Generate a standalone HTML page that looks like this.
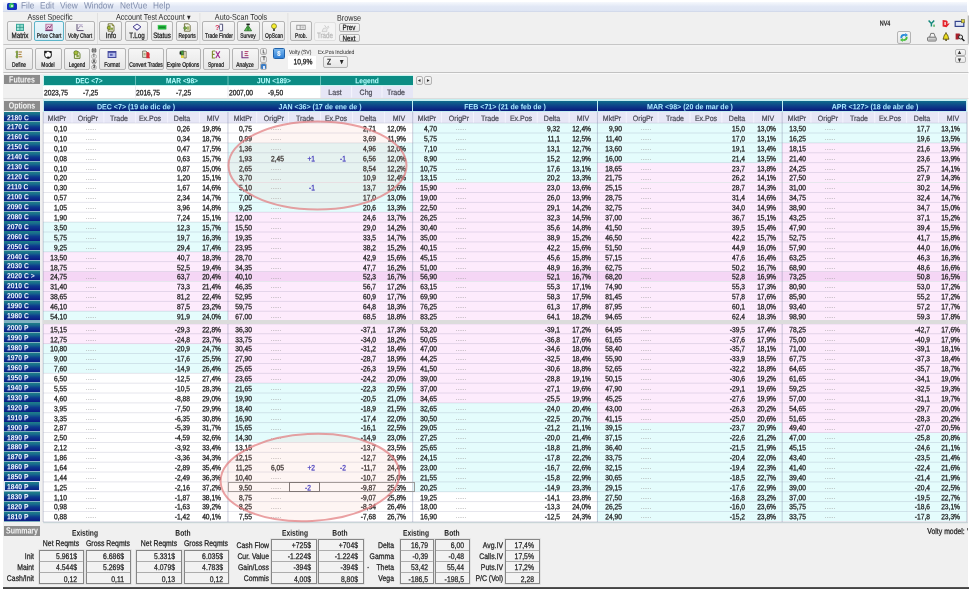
<!DOCTYPE html>
<html><head><meta charset="utf-8"><title>Options Matrix</title><style>
html,body{margin:0;padding:0;background:#fff}
#p{will-change:transform;-webkit-mask-image:linear-gradient(#000,#000);mask-image:linear-gradient(#000,#000);position:relative;width:972px;height:591px;overflow:hidden;font-family:"Liberation Sans",Arial,sans-serif;color:#222}
#p div,#p span{position:absolute}
.t{white-space:nowrap;line-height:1;font-size:7.6px;--k:0.8}
.t.c{transform:translate(-50%,-50%) scaleX(var(--k)) rotate(0.03deg)}
.t.l{transform-origin:0 50%;transform:translate(0,-50%) scaleX(var(--k)) rotate(0.03deg)}
.t.r{transform-origin:100% 50%;transform:translate(-100%,-50%) scaleX(var(--k)) rotate(0.03deg)}
.menu{font-size:9.2px;color:#7f8cab;--k:0.9}
.grp{font-size:8.4px;color:#2a2a2a;--k:0.86}
.bl{font-size:7.8px;color:#1a1a1a;--k:0.8;-webkit-text-stroke:0.25px}
.bs{font-size:6.4px;color:#1a1a1a;--k:0.77;-webkit-text-stroke:0.25px}
.xs{font-size:6px;color:#222;--k:0.84}
.dis{color:#b8b8b8}
.tiny{font-size:5.4px;color:#333;font-weight:bold;--k:0.9}
.icn{font-size:9px;font-weight:bold}
.lab{font-size:9px;font-weight:bold;color:#f4f4f4;--k:0.78}
.fh{font-size:7.5px;font-weight:bold;color:#b8ffff;--k:0.88}
.mt{font-size:7.5px;font-weight:bold;color:#a8e8ff;--k:0.94}
.hd{font-size:7.8px;color:#484854;--k:0.9;-webkit-text-stroke:0.2px}
.val{font-size:7.7px;color:#222;--k:0.865;-webkit-text-stroke:0.3px}
.dots{font-size:8px;color:#9a9a9a;--k:0.8}
.st{font-size:7.5px;font-weight:bold;color:#f0f6ff;--k:0.9}
.sh{font-size:8.4px;font-weight:bold;color:#222}
.sl{font-size:8.2px;color:#222;--k:0.84;-webkit-text-stroke:0.25px}
.sv{font-size:8.2px;color:#222;--k:0.835;-webkit-text-stroke:0.25px}
.btn{box-sizing:border-box;border:0.8px solid #b4b4b4;border-radius:2px;background:linear-gradient(#f6f6f6,#e6e6e6)}
.btn.hi{border-color:#5cb4c8;background:linear-gradient(#eaf6fb,#d6ecf6)}
.sk{background:linear-gradient(#1f8088 0%,#176a8c 25%,#0e3a8e 55%,#0a1a84 100%)}
.mh{background:linear-gradient(#0f6c8c 0%,#0c3c88 55%,#0a1a7c 100%)}
.gl{background:rgba(110,110,150,0.20)}
.vl{background:rgba(120,130,160,0.35)}
.vb{box-sizing:border-box;border:0.9px solid #868686;background:#f2f2f2;box-shadow:0 0 0 0.7px #dcdcdc}
</style></head><body><div id="p">
<div style="left:0.00px;top:0.00px;width:972.00px;height:591.00px;background:#fff"></div>
<div style="left:2.90px;top:2.20px;width:964.10px;height:9.40px;background:linear-gradient(#f6f8fd,#e2e8f5 45%,#dde4f3)"></div>
<svg style="position:absolute;left:2px;top:11px" width="965" height="2" viewBox="2 11 965 2"><rect x="2.90" y="11.40" width="964.10" height="0.70" fill="#ccd4e6"/></svg>
<div style="left:2.90px;top:11.50px;width:965.60px;height:576.50px;background:#f0f0f0"></div>
<div style="left:6.50px;top:2.50px;width:10.00px;height:7.30px;background:#1530c0;border-radius:1.5px"></div>
<div style="left:9.00px;top:3.20px;width:5.00px;height:5.00px;background:#35c060;border-radius:2.5px"></div>
<div style="left:10.50px;top:4.50px;width:2.00px;height:2.30px;background:#e8fff0;border-radius:1px"></div>
<span class="t l menu" style="left:21.00px;top:6.30px;">File</span>
<span class="t l menu" style="left:39.50px;top:6.30px;">Edit</span>
<span class="t l menu" style="left:60.00px;top:6.30px;">View</span>
<span class="t l menu" style="left:84.00px;top:6.30px;">Window</span>
<span class="t l menu" style="left:120.00px;top:6.30px;">NetVue</span>
<span class="t l menu" style="left:153.00px;top:6.30px;">Help</span>
<span class="t c grp" style="left:50.00px;top:16.60px;">Asset Specific</span>
<span class="t c grp" style="left:152.50px;top:16.60px;">Account Test Account &#9662;</span>
<span class="t c grp" style="left:240.50px;top:16.60px;">Auto-Scan Tools</span>
<span class="t c grp" style="left:349.00px;top:17.60px;">Browse</span>
<div class="btn" style="left:7.00px;top:20.90px;width:25.00px;height:20.00px;"></div>
<svg style="position:absolute;left:14.50px;top:23.00px" width="10" height="9" viewBox="0 0 10 9"><rect x="1" y="0.8" width="8" height="7.2" fill="#3aa99c"/><rect x="2" y="1.8" width="2.4" height="5.2" fill="#a8e6da"/><rect x="5.4" y="1.8" width="2.6" height="5.2" fill="#8fdccd"/><path d="M1 4.4H9" stroke="#2c8c80" stroke-width=".7"/></svg>
<span class="t c bl" style="left:19.50px;top:35.70px;">Matrix</span>
<div class="btn hi" style="left:34.00px;top:20.90px;width:29.50px;height:20.00px;"></div>
<svg style="position:absolute;left:43.75px;top:23.00px" width="10" height="9" viewBox="0 0 10 9"><rect x="1.4" y="0.8" width="7.2" height="7.2" fill="#b66c9c"/><rect x="2.4" y="1.6" width="5.2" height="4.6" fill="#ecd2e4"/><path d="M2.4 6L4.5 3.2 5.8 5 7.6 1.8" stroke="#7a3c74" stroke-width=".9" fill="none"/><path d="M1.4 7.6H8.6" stroke="#5c3468" stroke-width=".9"/></svg>
<span class="t c bs" style="left:48.75px;top:35.70px;">Price Chart</span>
<div class="btn" style="left:65.00px;top:20.90px;width:29.50px;height:20.00px;"></div>
<svg style="position:absolute;left:74.75px;top:23.00px" width="10" height="9" viewBox="0 0 10 9"><path d="M2 1V7.6H8.6" stroke="#5a4c70" stroke-width="1" fill="none"/><path d="M3.4 5.8C4.4 2.4 6.2 2.2 8 4.2" stroke="#8a78a4" stroke-width=".9" fill="none"/><rect x="3.2" y="1.2" width="4.6" height="1" fill="#c4b8d8"/></svg>
<span class="t c bs" style="left:79.75px;top:35.70px;">Volty Chart</span>
<div class="btn" style="left:99.00px;top:20.90px;width:23.00px;height:20.00px;"></div>
<svg style="position:absolute;left:105.50px;top:23.00px" width="10" height="9" viewBox="0 0 10 9"><path d="M2.2 .8H6.2L8 2.6V8.2H2.2Z" fill="#f6f6e6" stroke="#5c5c20" stroke-width=".8"/><path d="M6.2 .8V2.6H8" fill="#c8d040" stroke="#5c5c20" stroke-width=".6"/><path d="M1.4 3.8L4.2 2.6V6.8L1.4 5.8Z" fill="#a8c030" stroke="#4c5c18" stroke-width=".6"/><rect x="4.6" y="4.6" width="2.4" height="2.2" fill="#88a040"/></svg>
<span class="t c bl" style="left:110.50px;top:35.70px;">Info</span>
<div class="btn" style="left:125.00px;top:20.90px;width:23.00px;height:20.00px;"></div>
<svg style="position:absolute;left:131.50px;top:23.00px" width="10" height="9" viewBox="0 0 10 9"><path d="M5 1L9 3.8 5 7 1 3.8Z" fill="#f4f4ff" stroke="#48408c" stroke-width="1"/><path d="M1.6 4.8L5 7.6 8.4 4.8" stroke="#7870b0" stroke-width=".7" fill="none"/></svg>
<span class="t c bl" style="left:136.50px;top:35.70px;">T.Log</span>
<div class="btn" style="left:151.00px;top:20.90px;width:21.50px;height:20.00px;"></div>
<svg style="position:absolute;left:156.75px;top:23.00px" width="10" height="9" viewBox="0 0 10 9"><rect x=".8" y="2" width="8.6" height="4.6" rx=".6" fill="#22b43c"/><rect x="2" y="3.6" width="6.2" height="1.2" fill="#12802a"/><path d="M.8 2.3H9.4" stroke="#70e080" stroke-width=".6"/></svg>
<span class="t c bl" style="left:161.75px;top:35.70px;">Status</span>
<div class="btn" style="left:175.50px;top:20.90px;width:22.00px;height:20.00px;"></div>
<svg style="position:absolute;left:181.50px;top:23.00px" width="10" height="9" viewBox="0 0 10 9"><path d="M2.4 .8H6.4L8.2 2.6V8.2H2.4Z" fill="#f4f4e4" stroke="#5c5c28" stroke-width=".8"/><path d="M1.2 5L3.4 3.2V4.4H5V5.8H3.4V7Z" fill="#70a838" stroke="#3c6420" stroke-width=".4"/><rect x="5" y="3.4" width="2.4" height="3.4" fill="#a8b868"/></svg>
<span class="t c bs" style="left:186.50px;top:35.70px;">Reports</span>
<div class="btn" style="left:202.00px;top:20.90px;width:33.00px;height:20.00px;"></div>
<svg style="position:absolute;left:213.50px;top:23.00px" width="10" height="9" viewBox="0 0 10 9"><text x="1" y="7.2" font-family="Liberation Sans,sans-serif" font-size="7.5" font-weight="bold" fill="#d83058">?</text><path d="M5.6 1.2H8.6V7.8H5.6" fill="#f4f4ff" stroke="#44446c" stroke-width=".9"/><path d="M5.4 2.4V6.6" stroke="#44446c" stroke-width=".8"/></svg>
<span class="t c bs" style="left:218.50px;top:35.70px;">Trade Finder</span>
<div class="btn" style="left:237.00px;top:20.90px;width:22.50px;height:20.00px;"></div>
<svg style="position:absolute;left:243.25px;top:23.00px" width="10" height="9" viewBox="0 0 10 9"><rect x="3.4" y=".6" width="3.4" height="1.6" fill="#202020"/><path d="M5 2.2L8.6 7.8H1.4Z" fill="#58c050" stroke="#286c28" stroke-width=".8"/><path d="M5 3.6V7.6" stroke="#1c4c1c" stroke-width=".8"/></svg>
<span class="t c bs" style="left:248.25px;top:35.70px;">Survey</span>
<div class="btn" style="left:262.00px;top:20.90px;width:23.00px;height:20.00px;"></div>
<svg style="position:absolute;left:268.50px;top:23.00px" width="10" height="9" viewBox="0 0 10 9"><circle cx="5" cy="3.2" r="2.5" fill="#f6ee30" stroke="#6c6c20" stroke-width=".7"/><rect x="4" y="5.6" width="2" height="2.4" fill="#585848"/></svg>
<span class="t c bs" style="left:273.50px;top:35.70px;">OpScan</span>
<div class="btn" style="left:290.00px;top:20.90px;width:22.00px;height:20.00px;"></div>
<svg style="position:absolute;left:296.00px;top:23.00px" width="10" height="9" viewBox="0 0 10 9"><rect x=".8" y="2.2" width="8.4" height="4.4" fill="#f2f2f2" stroke="#8c8c8c" stroke-width=".8"/><path d="M4.2 2.2V6.6" stroke="#8c8c8c" stroke-width=".8"/><rect x="5.4" y="3.4" width="2.6" height="2" fill="#c4c4c4"/></svg>
<span class="t c bs" style="left:301.00px;top:35.70px;">Prob.</span>
<div style="left:314.00px;top:21.50px;width:22.00px;height:19.50px;border:1px solid #e0e0e0;background:#f4f4f4;border-radius:2px;box-sizing:border-box"></div>
<svg style="position:absolute;left:320.00px;top:23.50px" width="10" height="9" viewBox="0 0 10 9"><path d="M2 7.6L3.4 4.4 6.2 4 8.4 2.2 8.8 3.4 6.8 5.6V7.6Z" fill="#ececec" stroke="#c4c4c4" stroke-width=".7"/><path d="M4.6 1.2L6 3.4" stroke="#c8c8c8" stroke-width=".9"/></svg>
<span class="t c bl dis" style="left:325.00px;top:36.00px;">Trade</span>
<div class="btn" style="left:339.00px;top:23.00px;width:20.50px;height:8.70px;"></div>
<span class="t c bl" style="left:349.20px;top:28.10px;">Prev</span>
<div class="btn" style="left:339.00px;top:33.50px;width:20.50px;height:8.50px;"></div>
<span class="t c bl" style="left:349.20px;top:38.60px;">Next</span>
<svg style="position:absolute;left:97px;top:13px" width="1" height="31" viewBox="97 13 1 31"><rect x="97.00" y="13.00" width="0.80" height="31.00" fill="#dcdcdc"/></svg>
<svg style="position:absolute;left:199px;top:13px" width="2" height="31" viewBox="199 13 2 31"><rect x="199.50" y="13.00" width="0.80" height="31.00" fill="#dcdcdc"/></svg>
<svg style="position:absolute;left:287px;top:13px" width="2" height="31" viewBox="287 13 2 31"><rect x="287.50" y="13.00" width="0.80" height="31.00" fill="#dcdcdc"/></svg>
<span class="t c bs" style="left:884.50px;top:23.40px;font-size:7px">NV4</span>
<div class="btn" style="left:897.40px;top:30.90px;width:13.20px;height:13.00px;"></div>
<svg style="position:absolute;left:899px;top:32px" width="10" height="11" viewBox="0 0 10 11"><path d="M1.4 6.2C1 3 3.6 1.4 6.4 2.4L6 1 9 3 6 5 6.2 3.8C4.4 3.4 3 4.4 3.2 6.2Z" fill="#2a8cd8"/><path d="M8.6 4.8C9 8 6.4 9.600 3.600 8.6L4 10 1 8 4 6 3.800 7.2C5.600 7.600 7 6.600 6.800 4.800Z" fill="#48c03c"/></svg>
<svg style="position:absolute;left:925px;top:18px" width="44" height="26" viewBox="925 18 44 26"><path d="M928.6 20.6L931.4 23.6V26.6M934.2 20.6L931.4 23.6" stroke="#14887c" stroke-width="1.5" fill="none"/><rect x="933.4" y="24.6" width="1.3" height="2.2" fill="#38a848"/><path d="M942.6 20L946.6 20.4 948 22 946.8 23.6 949.8 23.6 946.6 27.2 942.6 26.6Z" fill="#e4242c"/><rect x="944.4" y="22" width="1.4" height="3" fill="#fbe4e4"/><rect x="955.2" y="21.4" width="8.6" height="5" fill="#dfe6f6" stroke="#34448c" stroke-width="1.2"/><rect x="961.6" y="19.6" width="2.8" height="3.2" fill="#d8cc3c" stroke="#5c5c20" stroke-width=".5"/><path d="M929.6 37.4L930.8 33.4H934L935.4 37.4" fill="#f4f4f4" stroke="#6c6c6c" stroke-width=".9"/><rect x="927.6" y="37.2" width="8.6" height="3.8" rx=".8" fill="#e4e4e4" stroke="#606060" stroke-width=".9"/><path d="M928.6 39.2H935.4" stroke="#888" stroke-width=".7"/><path d="M943 39.2C944 38 943.6 34.2 946 33.6 948.4 34.2 948 38 949 39.2Z" fill="#ecdc20" stroke="#4c4410" stroke-width=".8"/><rect x="945.2" y="39.4" width="1.8" height="1.4" fill="#4c4410"/><rect x="945.4" y="32.4" width="1.2" height="1.4" fill="#4c4410"/><path d="M955.6 33.4H959.6L960.4 36 958.4 39.6H955.6Z" fill="#a8202c"/><circle cx="960.6" cy="37" r="2" fill="#e8e8e8" stroke="#2c2c2c" stroke-width="1"/><path d="M961.8 38.4L964.4 41" stroke="#1c1c1c" stroke-width="1.4"/></svg>
<svg style="position:absolute;left:967px;top:15px" width="2" height="29" viewBox="967 15 2 29"><rect x="967.80" y="15.50" width="0.90" height="28.30" fill="#9c9c9c"/></svg>
<svg style="position:absolute;left:3px;top:44px" width="966" height="2" viewBox="3 44 966 2"><rect x="3.40" y="44.20" width="965.10" height="1.10" fill="#bcbcbc"/></svg>
<svg style="position:absolute;left:3px;top:45px" width="966" height="2" viewBox="3 45 966 2"><rect x="3.40" y="45.30" width="965.10" height="0.90" fill="#fbfbfb"/></svg>
<div class="btn" style="left:5.00px;top:47.90px;width:27.50px;height:22.20px;"></div>
<svg style="position:absolute;left:13.75px;top:50.40px" width="10" height="9" viewBox="0 0 10 9"><path d="M3 .8V8.2" stroke="#5c7c28" stroke-width="1.5"/><path d="M4.4 2H8M4.4 4.4H7.4M4.4 6.8H8.2" stroke="#a87c2c" stroke-width="1"/><rect x="1.6" y="1.2" width="1.8" height="1.6" fill="#88a838"/><rect x="1.6" y="5.8" width="1.8" height="1.6" fill="#88a838"/></svg>
<span class="t c bs" style="left:18.75px;top:64.60px;">Define</span>
<div class="btn" style="left:35.00px;top:47.90px;width:26.50px;height:22.20px;"></div>
<svg style="position:absolute;left:43.25px;top:50.40px" width="10" height="9" viewBox="0 0 10 9"><circle cx="5" cy="4.6" r="3.4" fill="#fff" stroke="#2a2a2a" stroke-width="1.1"/><rect x="1.2" y=".8" width="2.4" height="2.4" fill="#1c1c1c"/><rect x="6.6" y="1" width="2" height="2" fill="#1c1c1c"/><rect x="4.2" y="6.6" width="2.2" height="2" fill="#1c1c1c"/></svg>
<span class="t c bs" style="left:48.25px;top:64.60px;">Model</span>
<div class="btn" style="left:63.50px;top:47.90px;width:26.50px;height:22.20px;"></div>
<svg style="position:absolute;left:71.75px;top:50.40px" width="10" height="9" viewBox="0 0 10 9"><path d="M2.4 1.8H6.4L8 3.4V8.4H2.4Z" fill="#f0f2d8" stroke="#5c7824" stroke-width=".9"/><circle cx="4" cy="2.8" r="2.1" fill="#a8c03c" stroke="#587020" stroke-width=".7"/><rect x="4.4" y="4.8" width="2.4" height="2.4" fill="#88a040"/></svg>
<span class="t c bs" style="left:76.75px;top:64.60px;">Legend</span>
<div class="btn" style="left:91.20px;top:48.00px;width:5.80px;height:5.30px;border-radius:2.6px"></div>
<span class="t c tiny" style="left:94.10px;top:50.80px;">M</span>
<div class="btn" style="left:91.20px;top:53.55px;width:5.80px;height:5.30px;border-radius:2.6px"></div>
<span class="t c tiny" style="left:94.10px;top:56.35px;">I</span>
<div class="btn" style="left:91.20px;top:59.10px;width:5.80px;height:5.30px;border-radius:2.6px"></div>
<span class="t c tiny" style="left:94.10px;top:61.90px;">A</span>
<div class="btn" style="left:91.20px;top:64.65px;width:5.80px;height:5.30px;border-radius:2.6px"></div>
<span class="t c tiny" style="left:94.10px;top:67.45px;">3</span>
<div class="btn" style="left:99.00px;top:47.90px;width:26.50px;height:22.20px;"></div>
<svg style="position:absolute;left:107.25px;top:50.40px" width="10" height="9" viewBox="0 0 10 9"><rect x=".6" y="1" width="8.8" height="7" fill="#44489c"/><rect x="1.6" y="2.8" width="6.8" height="4.2" fill="#b4bcec"/><rect x="3" y="3.8" width="2.6" height="2" fill="#5860b4"/></svg>
<span class="t c bs" style="left:112.25px;top:64.60px;">Format</span>
<div class="btn" style="left:127.50px;top:47.90px;width:36.00px;height:22.20px;"></div>
<svg style="position:absolute;left:140.50px;top:50.40px" width="10" height="9" viewBox="0 0 10 9"><path d="M1.6 1H5L6.2 2.2V7.4H1.6Z" fill="#e8e4d4" stroke="#6c6c5c" stroke-width=".8"/><path d="M5.4 2.2C8 1.4 9.4 3.6 8.4 6.2L9 8.2H5.4Z" fill="#d82c34"/><rect x="2.6" y="3" width="2" height="2.4" fill="#a8b48c"/></svg>
<span class="t c bs" style="left:145.50px;top:64.60px;">Convert Trades</span>
<div class="btn" style="left:165.50px;top:47.90px;width:35.50px;height:22.20px;"></div>
<svg style="position:absolute;left:178.25px;top:50.40px" width="10" height="9" viewBox="0 0 10 9"><path d="M2 1.4L5.4 .8 6 4.4 3.4 5.6Z" fill="#48a040" stroke="#1c4c1c" stroke-width=".7"/><path d="M5.8 1.4H8.2V8H5.8Z" fill="#ece8c8" stroke="#5c5c3c" stroke-width=".7"/><rect x="3" y="5.4" width="2.6" height="2.6" fill="#e4d43c"/><rect x="1.6" y="2.2" width="1.6" height="2.2" fill="#1c1c1c"/></svg>
<span class="t c bs" style="left:183.25px;top:64.60px;">Expire Options</span>
<div class="btn" style="left:203.00px;top:47.90px;width:26.50px;height:22.20px;"></div>
<svg style="position:absolute;left:211.25px;top:50.40px" width="10" height="9" viewBox="0 0 10 9"><path d="M1.4 1V8H4.2M1.4 1H4.2M1.4 4.4H3.6" stroke="#7c8c2c" stroke-width="1.1" fill="none"/><path d="M4.8 1.2L8.8 8M8.8 1.2L4.8 8" stroke="#a02c8c" stroke-width="1.2"/></svg>
<span class="t c bs" style="left:216.25px;top:64.60px;">Spread</span>
<div class="btn" style="left:232.00px;top:47.90px;width:26.50px;height:22.20px;"></div>
<svg style="position:absolute;left:240.25px;top:50.40px" width="10" height="9" viewBox="0 0 10 9"><path d="M2 1V7.8H8.6" stroke="#6c2c7c" stroke-width="1.1" fill="none"/><path d="M4.6 1.6H8.4M4.6 3.6H7.6M4.6 5.6H8.4" stroke="#b03c6c" stroke-width="1"/></svg>
<span class="t c bs" style="left:245.25px;top:64.60px;">Analyze</span>
<div class="btn" style="left:260.20px;top:48.20px;width:7.10px;height:7.00px;"></div>
<div class="btn" style="left:260.20px;top:55.70px;width:7.10px;height:6.90px;"></div>
<div class="btn" style="left:260.20px;top:63.10px;width:7.10px;height:7.00px;"></div>
<span class="t c tiny" style="left:263.80px;top:51.90px;">L</span>
<span class="t c tiny" style="left:263.80px;top:59.30px;">T</span>
<div style="left:261.40px;top:64.20px;width:4.80px;height:5.00px;background:#3b7cc4;border-radius:1px"></div>
<div style="left:262.60px;top:66.20px;width:2.40px;height:3.00px;background:#dbe9ff"></div>
<div style="left:273.00px;top:48.10px;width:12.00px;height:10.70px;background:linear-gradient(#7ab8ee,#2f80d8);border:0.8px solid #2060a8;border-radius:1.5px;box-sizing:border-box"></div>
<span class="t c bs" style="left:279.00px;top:53.60px;color:#fff;font-weight:bold">S</span>
<span class="t l xs" style="left:288.70px;top:51.60px;">Volty (SV)</span>
<div style="left:288.00px;top:56.00px;width:28.00px;height:13.00px;background:#fff"></div>
<span class="t c val" style="left:303.00px;top:62.30px;">10,9%</span>
<span class="t l xs" style="left:318.00px;top:51.60px;">Ex.Pos Included</span>
<div class="btn" style="left:323.00px;top:56.00px;width:24.50px;height:11.50px;"></div>
<span class="t l val" style="left:326.50px;top:62.00px;">Z</span>
<span class="t c val" style="left:342.00px;top:62.20px;">&#9662;</span>
<div class="btn" style="left:954.60px;top:48.50px;width:11.20px;height:7.60px;"></div>
<div class="btn" style="left:954.60px;top:56.20px;width:11.20px;height:6.70px;"></div>
<span class="t c tiny" style="left:960.20px;top:52.30px;font-size:6.5px">&#9652;</span>
<span class="t c tiny" style="left:960.20px;top:59.50px;font-size:6.5px">&#9662;</span>
<svg style="position:absolute;left:3px;top:72px" width="966" height="2" viewBox="3 72 966 2"><rect x="3.40" y="72.00" width="965.10" height="1.10" fill="#c2c2c2"/></svg>
<svg style="position:absolute;left:3px;top:73px" width="966" height="1" viewBox="3 73 966 1"><rect x="3.40" y="73.10" width="965.10" height="0.90" fill="#fbfbfb"/></svg>
<div style="left:4.30px;top:74.60px;width:36.20px;height:9.80px;background:#8c8c8c"></div>
<span class="t c lab" style="left:22.40px;top:80.10px;">Futures</span>
<div style="left:43.20px;top:75.20px;width:370.00px;height:10.80px;background:#c8f4f0"></div>
<div style="left:43.60px;top:76.20px;width:369.60px;height:8.70px;background:#0c8c84"></div>
<span class="t c fh" style="left:89.35px;top:80.60px;">DEC &lt;7&gt;</span>
<span class="t c fh" style="left:181.75px;top:80.60px;">MAR &lt;98&gt;</span>
<svg style="position:absolute;left:135px;top:76px" width="1" height="9" viewBox="135 76 1 9"><rect x="135.10" y="76.20" width="0.80" height="8.70" fill="#7fd0c8"/></svg>
<span class="t c fh" style="left:274.25px;top:80.60px;">JUN &lt;189&gt;</span>
<svg style="position:absolute;left:227px;top:76px" width="2" height="9" viewBox="227 76 2 9"><rect x="227.60" y="76.20" width="0.80" height="8.70" fill="#7fd0c8"/></svg>
<span class="t c fh" style="left:366.85px;top:80.60px;">Legend</span>
<svg style="position:absolute;left:320px;top:76px" width="1" height="9" viewBox="320 76 1 9"><rect x="320.10" y="76.20" width="0.80" height="8.70" fill="#7fd0c8"/></svg>
<div style="left:43.20px;top:86.30px;width:277.30px;height:11.30px;background:#fff"></div>
<span class="t l val" style="left:43.70px;top:93.30px;">2023,75</span>
<span class="t l val" style="left:83.20px;top:93.30px;">-7,25</span>
<span class="t l val" style="left:136.00px;top:93.30px;">2016,75</span>
<span class="t l val" style="left:175.50px;top:93.30px;">-7,25</span>
<svg style="position:absolute;left:135px;top:86px" width="1" height="12" viewBox="135 86 1 12"><rect x="135.10" y="86.30" width="0.80" height="11.30" fill="#e4e4ea"/></svg>
<span class="t l val" style="left:228.50px;top:93.30px;">2007,00</span>
<span class="t l val" style="left:268.00px;top:93.30px;">-9,50</span>
<svg style="position:absolute;left:227px;top:86px" width="2" height="12" viewBox="227 86 2 12"><rect x="227.60" y="86.30" width="0.80" height="11.30" fill="#e4e4ea"/></svg>
<div style="left:320.50px;top:86.30px;width:92.70px;height:11.30px;background:#e6e6f6"></div>
<span class="t c hd" style="left:334.90px;top:93.40px;">Last</span>
<span class="t c hd" style="left:365.65px;top:93.40px;">Chg</span>
<svg style="position:absolute;left:351px;top:86px" width="2" height="12" viewBox="351 86 2 12"><rect x="351.30" y="86.30" width="0.80" height="11.30" fill="#f8f8ff"/></svg>
<span class="t c hd" style="left:396.40px;top:93.40px;">Trade</span>
<svg style="position:absolute;left:381px;top:86px" width="2" height="12" viewBox="381 86 2 12"><rect x="381.60" y="86.30" width="0.80" height="11.30" fill="#f8f8ff"/></svg>
<div class="btn" style="left:415.50px;top:76.30px;width:7.70px;height:8.50px;"></div>
<div class="btn" style="left:424.00px;top:76.30px;width:7.80px;height:8.50px;"></div>
<span class="t c tiny" style="left:419.20px;top:80.60px;">&#9666;</span>
<span class="t c tiny" style="left:427.80px;top:80.60px;">&#9656;</span>
<svg style="position:absolute;left:3px;top:98px" width="966" height="1" viewBox="3 98 966 1"><rect x="3.40" y="98.20" width="965.10" height="0.80" fill="#d8d8d8"/></svg>
<div style="left:4.30px;top:100.90px;width:36.20px;height:9.80px;background:#8c8c8c"></div>
<span class="t c lab" style="left:22.40px;top:105.80px;">Options</span>
<div style="left:43.00px;top:99.40px;width:923.90px;height:12.60px;background:#c4eef0"></div>
<div class="mh" style="left:43.60px;top:101.40px;width:183.94px;height:9.70px;"></div>
<span class="t c mt" style="left:135.57px;top:106.50px;">DEC &lt;7&gt; (19 de dic de )</span>
<div class="mh" style="left:228.34px;top:101.40px;width:183.94px;height:9.70px;"></div>
<span class="t c mt" style="left:320.31px;top:106.50px;">JAN &lt;36&gt; (17 de ene de )</span>
<div class="mh" style="left:413.08px;top:101.40px;width:183.94px;height:9.70px;"></div>
<span class="t c mt" style="left:505.05px;top:106.50px;">FEB &lt;71&gt; (21 de feb de )</span>
<div class="mh" style="left:597.82px;top:101.40px;width:183.94px;height:9.70px;"></div>
<span class="t c mt" style="left:689.79px;top:106.50px;">MAR &lt;98&gt; (20 de mar de )</span>
<div class="mh" style="left:782.56px;top:101.40px;width:183.94px;height:9.70px;"></div>
<span class="t c mt" style="left:874.53px;top:106.50px;">APR &lt;127&gt; (18 de abr de )</span>
<div style="left:43.20px;top:111.90px;width:923.70px;height:410.10px;background:#fff"></div>
<div style="left:43.20px;top:111.90px;width:923.70px;height:11.20px;background:#e7e7f6"></div>
<span class="t c hd" style="left:56.80px;top:118.80px;">MktPr</span>
<span class="t c hd" style="left:87.90px;top:118.80px;">OrigPr</span>
<svg style="position:absolute;left:71px;top:111px" width="2" height="13" viewBox="71 111 2 13"><rect x="71.60" y="111.90" width="0.80" height="11.20" fill="#f6f6ff"/></svg>
<span class="t c hd" style="left:119.20px;top:118.80px;">Trade</span>
<svg style="position:absolute;left:103px;top:111px" width="2" height="13" viewBox="103 111 2 13"><rect x="103.50" y="111.90" width="0.80" height="11.20" fill="#f6f6ff"/></svg>
<span class="t c hd" style="left:150.30px;top:118.80px;">Ex.Pos</span>
<svg style="position:absolute;left:135px;top:111px" width="2" height="13" viewBox="135 111 2 13"><rect x="135.40" y="111.90" width="0.80" height="11.20" fill="#f6f6ff"/></svg>
<span class="t c hd" style="left:181.80px;top:118.80px;">Delta</span>
<svg style="position:absolute;left:167px;top:111px" width="2" height="13" viewBox="167 111 2 13"><rect x="167.30" y="111.90" width="0.80" height="11.20" fill="#f6f6ff"/></svg>
<span class="t c hd" style="left:212.80px;top:118.80px;">MIV</span>
<svg style="position:absolute;left:199px;top:111px" width="2" height="13" viewBox="199 111 2 13"><rect x="199.20" y="111.90" width="0.80" height="11.20" fill="#f6f6ff"/></svg>
<span class="t c hd" style="left:242.74px;top:118.80px;">MktPr</span>
<span class="t c hd" style="left:273.84px;top:118.80px;">OrigPr</span>
<svg style="position:absolute;left:256px;top:111px" width="2" height="13" viewBox="256 111 2 13"><rect x="256.34" y="111.90" width="0.80" height="11.20" fill="#f6f6ff"/></svg>
<span class="t c hd" style="left:305.14px;top:118.80px;">Trade</span>
<svg style="position:absolute;left:288px;top:111px" width="2" height="13" viewBox="288 111 2 13"><rect x="288.24" y="111.90" width="0.80" height="11.20" fill="#f6f6ff"/></svg>
<span class="t c hd" style="left:336.24px;top:118.80px;">Ex.Pos</span>
<svg style="position:absolute;left:320px;top:111px" width="1" height="13" viewBox="320 111 1 13"><rect x="320.14" y="111.90" width="0.80" height="11.20" fill="#f6f6ff"/></svg>
<span class="t c hd" style="left:367.74px;top:118.80px;">Delta</span>
<svg style="position:absolute;left:352px;top:111px" width="1" height="13" viewBox="352 111 1 13"><rect x="352.04" y="111.90" width="0.80" height="11.20" fill="#f6f6ff"/></svg>
<span class="t c hd" style="left:398.74px;top:118.80px;">MIV</span>
<svg style="position:absolute;left:383px;top:111px" width="2" height="13" viewBox="383 111 2 13"><rect x="383.94" y="111.90" width="0.80" height="11.20" fill="#f6f6ff"/></svg>
<span class="t c hd" style="left:427.48px;top:118.80px;">MktPr</span>
<span class="t c hd" style="left:458.58px;top:118.80px;">OrigPr</span>
<svg style="position:absolute;left:441px;top:111px" width="1" height="13" viewBox="441 111 1 13"><rect x="441.08" y="111.90" width="0.80" height="11.20" fill="#f6f6ff"/></svg>
<span class="t c hd" style="left:489.88px;top:118.80px;">Trade</span>
<svg style="position:absolute;left:472px;top:111px" width="2" height="13" viewBox="472 111 2 13"><rect x="472.98" y="111.90" width="0.80" height="11.20" fill="#f6f6ff"/></svg>
<span class="t c hd" style="left:520.98px;top:118.80px;">Ex.Pos</span>
<svg style="position:absolute;left:504px;top:111px" width="2" height="13" viewBox="504 111 2 13"><rect x="504.88" y="111.90" width="0.80" height="11.20" fill="#f6f6ff"/></svg>
<span class="t c hd" style="left:552.48px;top:118.80px;">Delta</span>
<svg style="position:absolute;left:536px;top:111px" width="2" height="13" viewBox="536 111 2 13"><rect x="536.78" y="111.90" width="0.80" height="11.20" fill="#f6f6ff"/></svg>
<span class="t c hd" style="left:583.48px;top:118.80px;">MIV</span>
<svg style="position:absolute;left:568px;top:111px" width="2" height="13" viewBox="568 111 2 13"><rect x="568.68" y="111.90" width="0.80" height="11.20" fill="#f6f6ff"/></svg>
<span class="t c hd" style="left:612.22px;top:118.80px;">MktPr</span>
<span class="t c hd" style="left:643.32px;top:118.80px;">OrigPr</span>
<svg style="position:absolute;left:625px;top:111px" width="2" height="13" viewBox="625 111 2 13"><rect x="625.82" y="111.90" width="0.80" height="11.20" fill="#f6f6ff"/></svg>
<span class="t c hd" style="left:674.62px;top:118.80px;">Trade</span>
<svg style="position:absolute;left:657px;top:111px" width="2" height="13" viewBox="657 111 2 13"><rect x="657.72" y="111.90" width="0.80" height="11.20" fill="#f6f6ff"/></svg>
<span class="t c hd" style="left:705.72px;top:118.80px;">Ex.Pos</span>
<svg style="position:absolute;left:689px;top:111px" width="2" height="13" viewBox="689 111 2 13"><rect x="689.62" y="111.90" width="0.80" height="11.20" fill="#f6f6ff"/></svg>
<span class="t c hd" style="left:737.22px;top:118.80px;">Delta</span>
<svg style="position:absolute;left:721px;top:111px" width="2" height="13" viewBox="721 111 2 13"><rect x="721.52" y="111.90" width="0.80" height="11.20" fill="#f6f6ff"/></svg>
<span class="t c hd" style="left:768.22px;top:118.80px;">MIV</span>
<svg style="position:absolute;left:753px;top:111px" width="2" height="13" viewBox="753 111 2 13"><rect x="753.42" y="111.90" width="0.80" height="11.20" fill="#f6f6ff"/></svg>
<span class="t c hd" style="left:796.96px;top:118.80px;">MktPr</span>
<span class="t c hd" style="left:828.06px;top:118.80px;">OrigPr</span>
<svg style="position:absolute;left:810px;top:111px" width="2" height="13" viewBox="810 111 2 13"><rect x="810.56" y="111.90" width="0.80" height="11.20" fill="#f6f6ff"/></svg>
<span class="t c hd" style="left:859.36px;top:118.80px;">Trade</span>
<svg style="position:absolute;left:842px;top:111px" width="2" height="13" viewBox="842 111 2 13"><rect x="842.46" y="111.90" width="0.80" height="11.20" fill="#f6f6ff"/></svg>
<span class="t c hd" style="left:890.46px;top:118.80px;">Ex.Pos</span>
<svg style="position:absolute;left:874px;top:111px" width="2" height="13" viewBox="874 111 2 13"><rect x="874.36" y="111.90" width="0.80" height="11.20" fill="#f6f6ff"/></svg>
<span class="t c hd" style="left:921.96px;top:118.80px;">Delta</span>
<svg style="position:absolute;left:906px;top:111px" width="2" height="13" viewBox="906 111 2 13"><rect x="906.26" y="111.90" width="0.80" height="11.20" fill="#f6f6ff"/></svg>
<span class="t c hd" style="left:952.96px;top:118.80px;">MIV</span>
<svg style="position:absolute;left:938px;top:111px" width="1" height="13" viewBox="938 111 1 13"><rect x="938.16" y="111.90" width="0.80" height="11.20" fill="#f6f6ff"/></svg>
<div style="left:3.60px;top:112.20px;width:36.60px;height:410.00px;background:#7fb0c0"></div>
<div class="sk" style="left:3.60px;top:112.20px;width:36.60px;height:9.20px;"></div>
<span class="t l st" style="left:6.90px;top:117.50px;">2180 C</span>
<div class="sk" style="left:3.60px;top:122.13px;width:36.60px;height:9.20px;"></div>
<span class="t l st" style="left:6.90px;top:127.43px;">2170 C</span>
<div class="sk" style="left:3.60px;top:132.06px;width:36.60px;height:9.20px;"></div>
<span class="t l st" style="left:6.90px;top:137.36px;">2160 C</span>
<div class="sk" style="left:3.60px;top:141.99px;width:36.60px;height:9.20px;"></div>
<span class="t l st" style="left:6.90px;top:147.29px;">2150 C</span>
<div class="sk" style="left:3.60px;top:151.92px;width:36.60px;height:9.20px;"></div>
<span class="t l st" style="left:6.90px;top:157.22px;">2140 C</span>
<div class="sk" style="left:3.60px;top:161.85px;width:36.60px;height:9.20px;"></div>
<span class="t l st" style="left:6.90px;top:167.15px;">2130 C</span>
<div class="sk" style="left:3.60px;top:171.78px;width:36.60px;height:9.20px;"></div>
<span class="t l st" style="left:6.90px;top:177.08px;">2120 C</span>
<div class="sk" style="left:3.60px;top:181.71px;width:36.60px;height:9.20px;"></div>
<span class="t l st" style="left:6.90px;top:187.01px;">2110 C</span>
<div class="sk" style="left:3.60px;top:191.64px;width:36.60px;height:9.20px;"></div>
<span class="t l st" style="left:6.90px;top:196.94px;">2100 C</span>
<div class="sk" style="left:3.60px;top:201.57px;width:36.60px;height:9.20px;"></div>
<span class="t l st" style="left:6.90px;top:206.87px;">2090 C</span>
<div class="sk" style="left:3.60px;top:211.50px;width:36.60px;height:9.20px;"></div>
<span class="t l st" style="left:6.90px;top:216.80px;">2080 C</span>
<div class="sk" style="left:3.60px;top:221.43px;width:36.60px;height:9.20px;"></div>
<span class="t l st" style="left:6.90px;top:226.73px;">2070 C</span>
<div class="sk" style="left:3.60px;top:231.36px;width:36.60px;height:9.20px;"></div>
<span class="t l st" style="left:6.90px;top:236.66px;">2060 C</span>
<div class="sk" style="left:3.60px;top:241.29px;width:36.60px;height:9.20px;"></div>
<span class="t l st" style="left:6.90px;top:246.59px;">2050 C</span>
<div class="sk" style="left:3.60px;top:251.22px;width:36.60px;height:9.20px;"></div>
<span class="t l st" style="left:6.90px;top:256.52px;">2040 C</span>
<div class="sk" style="left:3.60px;top:261.15px;width:36.60px;height:9.20px;"></div>
<span class="t l st" style="left:6.90px;top:266.45px;">2030 C</span>
<div class="sk" style="left:3.60px;top:271.08px;width:36.60px;height:9.20px;"></div>
<span class="t l st" style="left:6.90px;top:276.38px;">2020 C ></span>
<div class="sk" style="left:3.60px;top:281.01px;width:36.60px;height:9.20px;"></div>
<span class="t l st" style="left:6.90px;top:286.31px;">2010 C</span>
<div class="sk" style="left:3.60px;top:290.94px;width:36.60px;height:9.20px;"></div>
<span class="t l st" style="left:6.90px;top:296.24px;">2000 C</span>
<div class="sk" style="left:3.60px;top:300.87px;width:36.60px;height:9.20px;"></div>
<span class="t l st" style="left:6.90px;top:306.17px;">1990 C</span>
<div class="sk" style="left:3.60px;top:310.80px;width:36.60px;height:9.20px;"></div>
<span class="t l st" style="left:6.90px;top:316.10px;">1980 C</span>
<div class="sk" style="left:3.60px;top:323.00px;width:36.60px;height:9.20px;"></div>
<span class="t l st" style="left:6.90px;top:328.30px;">2000 P</span>
<div class="sk" style="left:3.60px;top:332.93px;width:36.60px;height:9.20px;"></div>
<span class="t l st" style="left:6.90px;top:338.23px;">1990 P</span>
<div class="sk" style="left:3.60px;top:342.86px;width:36.60px;height:9.20px;"></div>
<span class="t l st" style="left:6.90px;top:348.16px;">1980 P</span>
<div class="sk" style="left:3.60px;top:352.79px;width:36.60px;height:9.20px;"></div>
<span class="t l st" style="left:6.90px;top:358.09px;">1970 P</span>
<div class="sk" style="left:3.60px;top:362.72px;width:36.60px;height:9.20px;"></div>
<span class="t l st" style="left:6.90px;top:368.02px;">1960 P</span>
<div class="sk" style="left:3.60px;top:372.65px;width:36.60px;height:9.20px;"></div>
<span class="t l st" style="left:6.90px;top:377.95px;">1950 P</span>
<div class="sk" style="left:3.60px;top:382.58px;width:36.60px;height:9.20px;"></div>
<span class="t l st" style="left:6.90px;top:387.88px;">1940 P</span>
<div class="sk" style="left:3.60px;top:392.51px;width:36.60px;height:9.20px;"></div>
<span class="t l st" style="left:6.90px;top:397.81px;">1930 P</span>
<div class="sk" style="left:3.60px;top:402.44px;width:36.60px;height:9.20px;"></div>
<span class="t l st" style="left:6.90px;top:407.74px;">1920 P</span>
<div class="sk" style="left:3.60px;top:412.37px;width:36.60px;height:9.20px;"></div>
<span class="t l st" style="left:6.90px;top:417.67px;">1910 P</span>
<div class="sk" style="left:3.60px;top:422.30px;width:36.60px;height:9.20px;"></div>
<span class="t l st" style="left:6.90px;top:427.60px;">1900 P</span>
<div class="sk" style="left:3.60px;top:432.23px;width:36.60px;height:9.20px;"></div>
<span class="t l st" style="left:6.90px;top:437.53px;">1890 P</span>
<div class="sk" style="left:3.60px;top:442.16px;width:36.60px;height:9.20px;"></div>
<span class="t l st" style="left:6.90px;top:447.46px;">1880 P</span>
<div class="sk" style="left:3.60px;top:452.09px;width:36.60px;height:9.20px;"></div>
<span class="t l st" style="left:6.90px;top:457.39px;">1870 P</span>
<div class="sk" style="left:3.60px;top:462.02px;width:36.60px;height:9.20px;"></div>
<span class="t l st" style="left:6.90px;top:467.32px;">1860 P</span>
<div class="sk" style="left:3.60px;top:471.95px;width:36.60px;height:9.20px;"></div>
<span class="t l st" style="left:6.90px;top:477.25px;">1850 P</span>
<div class="sk" style="left:3.60px;top:481.88px;width:36.60px;height:9.20px;"></div>
<div style="left:3.60px;top:481.48px;width:36.60px;height:10.00px;border:0.9px solid #dce6f6;box-sizing:border-box"></div>
<span class="t l st" style="left:6.90px;top:487.18px;">1840 P</span>
<div class="sk" style="left:3.60px;top:491.81px;width:36.60px;height:9.20px;"></div>
<span class="t l st" style="left:6.90px;top:497.11px;">1830 P</span>
<div class="sk" style="left:3.60px;top:501.74px;width:36.60px;height:9.20px;"></div>
<span class="t l st" style="left:6.90px;top:507.04px;">1820 P</span>
<div class="sk" style="left:3.60px;top:511.67px;width:36.60px;height:9.20px;"></div>
<span class="t l st" style="left:6.90px;top:516.97px;">1810 P</span>
<span class="t r val" style="left:66.80px;top:128.90px;">0,10</span>
<span class="t c dots" style="left:90.80px;top:128.00px;">......</span>
<span class="t r val" style="left:190.30px;top:128.90px;">0,26</span>
<span class="t r val" style="left:220.80px;top:128.90px;">19,8%</span>
<span class="t r val" style="left:66.80px;top:138.80px;">0,10</span>
<span class="t c dots" style="left:90.80px;top:137.90px;">......</span>
<span class="t r val" style="left:190.30px;top:138.80px;">0,34</span>
<span class="t r val" style="left:220.80px;top:138.80px;">18,7%</span>
<span class="t r val" style="left:66.80px;top:148.70px;">0,10</span>
<span class="t c dots" style="left:90.80px;top:147.80px;">......</span>
<span class="t r val" style="left:190.30px;top:148.70px;">0,47</span>
<span class="t r val" style="left:220.80px;top:148.70px;">17,5%</span>
<span class="t r val" style="left:66.80px;top:158.60px;">0,08</span>
<span class="t c dots" style="left:90.80px;top:157.70px;">......</span>
<span class="t r val" style="left:190.30px;top:158.60px;">0,63</span>
<span class="t r val" style="left:220.80px;top:158.60px;">15,7%</span>
<span class="t r val" style="left:66.80px;top:168.50px;">0,10</span>
<span class="t c dots" style="left:90.80px;top:167.60px;">......</span>
<span class="t r val" style="left:190.30px;top:168.50px;">0,87</span>
<span class="t r val" style="left:220.80px;top:168.50px;">15,0%</span>
<span class="t r val" style="left:66.80px;top:178.40px;">0,20</span>
<span class="t c dots" style="left:90.80px;top:177.50px;">......</span>
<span class="t r val" style="left:190.30px;top:178.40px;">1,20</span>
<span class="t r val" style="left:220.80px;top:178.40px;">15,1%</span>
<span class="t r val" style="left:66.80px;top:188.30px;">0,30</span>
<span class="t c dots" style="left:90.80px;top:187.40px;">......</span>
<span class="t r val" style="left:190.30px;top:188.30px;">1,67</span>
<span class="t r val" style="left:220.80px;top:188.30px;">14,6%</span>
<span class="t r val" style="left:66.80px;top:198.20px;">0,57</span>
<span class="t c dots" style="left:90.80px;top:197.30px;">......</span>
<span class="t r val" style="left:190.30px;top:198.20px;">2,34</span>
<span class="t r val" style="left:220.80px;top:198.20px;">14,7%</span>
<span class="t r val" style="left:66.80px;top:208.10px;">1,05</span>
<span class="t c dots" style="left:90.80px;top:207.20px;">......</span>
<span class="t r val" style="left:190.30px;top:208.10px;">3,96</span>
<span class="t r val" style="left:220.80px;top:208.10px;">14,8%</span>
<span class="t r val" style="left:66.80px;top:218.00px;">1,90</span>
<span class="t c dots" style="left:90.80px;top:217.10px;">......</span>
<span class="t r val" style="left:190.30px;top:218.00px;">7,24</span>
<span class="t r val" style="left:220.80px;top:218.00px;">15,1%</span>
<div style="left:43.20px;top:222.10px;width:184.74px;height:9.90px;background:#e4fcfc"></div>
<span class="t r val" style="left:66.80px;top:227.90px;">3,50</span>
<span class="t c dots" style="left:90.80px;top:227.00px;">......</span>
<span class="t r val" style="left:190.30px;top:227.90px;">12,3</span>
<span class="t r val" style="left:220.80px;top:227.90px;">15,7%</span>
<div style="left:43.20px;top:232.00px;width:184.74px;height:9.90px;background:#e4fcfc"></div>
<span class="t r val" style="left:66.80px;top:237.80px;">5,75</span>
<span class="t c dots" style="left:90.80px;top:236.90px;">......</span>
<span class="t r val" style="left:190.30px;top:237.80px;">19,7</span>
<span class="t r val" style="left:220.80px;top:237.80px;">16,3%</span>
<div style="left:43.20px;top:241.90px;width:184.74px;height:9.90px;background:#e4fcfc"></div>
<span class="t r val" style="left:66.80px;top:247.70px;">9,25</span>
<span class="t c dots" style="left:90.80px;top:246.80px;">......</span>
<span class="t r val" style="left:190.30px;top:247.70px;">29,4</span>
<span class="t r val" style="left:220.80px;top:247.70px;">17,4%</span>
<div style="left:43.20px;top:251.80px;width:184.74px;height:9.90px;background:#fdebfc"></div>
<span class="t r val" style="left:66.80px;top:257.60px;">13,50</span>
<span class="t c dots" style="left:90.80px;top:256.70px;">......</span>
<span class="t r val" style="left:190.30px;top:257.60px;">40,7</span>
<span class="t r val" style="left:220.80px;top:257.60px;">18,3%</span>
<div style="left:43.20px;top:261.70px;width:184.74px;height:9.90px;background:#fdebfc"></div>
<span class="t r val" style="left:66.80px;top:267.50px;">18,75</span>
<span class="t c dots" style="left:90.80px;top:266.60px;">......</span>
<span class="t r val" style="left:190.30px;top:267.50px;">52,5</span>
<span class="t r val" style="left:220.80px;top:267.50px;">19,4%</span>
<div style="left:43.20px;top:271.60px;width:184.74px;height:9.90px;background:#f5d6f5"></div>
<span class="t r val" style="left:66.80px;top:277.40px;">24,75</span>
<span class="t c dots" style="left:90.80px;top:276.50px;">......</span>
<span class="t r val" style="left:190.30px;top:277.40px;">63,7</span>
<span class="t r val" style="left:220.80px;top:277.40px;">20,4%</span>
<div style="left:43.20px;top:281.50px;width:184.74px;height:9.90px;background:#fdebfc"></div>
<span class="t r val" style="left:66.80px;top:287.30px;">31,40</span>
<span class="t c dots" style="left:90.80px;top:286.40px;">......</span>
<span class="t r val" style="left:190.30px;top:287.30px;">73,3</span>
<span class="t r val" style="left:220.80px;top:287.30px;">21,4%</span>
<div style="left:43.20px;top:291.40px;width:184.74px;height:9.90px;background:#fdebfc"></div>
<span class="t r val" style="left:66.80px;top:297.20px;">38,65</span>
<span class="t c dots" style="left:90.80px;top:296.30px;">......</span>
<span class="t r val" style="left:190.30px;top:297.20px;">81,2</span>
<span class="t r val" style="left:220.80px;top:297.20px;">22,4%</span>
<div style="left:43.20px;top:301.30px;width:184.74px;height:9.90px;background:#fdebfc"></div>
<span class="t r val" style="left:66.80px;top:307.10px;">46,10</span>
<span class="t c dots" style="left:90.80px;top:306.20px;">......</span>
<span class="t r val" style="left:190.30px;top:307.10px;">87,5</span>
<span class="t r val" style="left:220.80px;top:307.10px;">23,2%</span>
<div style="left:43.20px;top:311.20px;width:184.74px;height:9.90px;background:#e4fcfc"></div>
<span class="t r val" style="left:66.80px;top:317.00px;">54,10</span>
<span class="t c dots" style="left:90.80px;top:316.10px;">......</span>
<span class="t r val" style="left:190.30px;top:317.00px;">91,9</span>
<span class="t r val" style="left:220.80px;top:317.00px;">24,0%</span>
<div style="left:43.20px;top:323.90px;width:184.74px;height:9.90px;background:#fdebfc"></div>
<span class="t r val" style="left:66.80px;top:329.70px;">15,15</span>
<span class="t c dots" style="left:90.80px;top:328.80px;">......</span>
<span class="t r val" style="left:190.30px;top:329.70px;">-29,3</span>
<span class="t r val" style="left:220.80px;top:329.70px;">22,8%</span>
<div style="left:43.20px;top:333.77px;width:184.74px;height:9.90px;background:#fdebfc"></div>
<span class="t r val" style="left:66.80px;top:339.57px;">12,75</span>
<span class="t c dots" style="left:90.80px;top:338.68px;">......</span>
<span class="t r val" style="left:190.30px;top:339.57px;">-24,8</span>
<span class="t r val" style="left:220.80px;top:339.57px;">23,7%</span>
<div style="left:43.20px;top:343.65px;width:184.74px;height:9.90px;background:#e4fcfc"></div>
<span class="t r val" style="left:66.80px;top:349.45px;">10,80</span>
<span class="t c dots" style="left:90.80px;top:348.55px;">......</span>
<span class="t r val" style="left:190.30px;top:349.45px;">-20,9</span>
<span class="t r val" style="left:220.80px;top:349.45px;">24,7%</span>
<div style="left:43.20px;top:353.52px;width:184.74px;height:9.90px;background:#e4fcfc"></div>
<span class="t r val" style="left:66.80px;top:359.32px;">9,00</span>
<span class="t c dots" style="left:90.80px;top:358.43px;">......</span>
<span class="t r val" style="left:190.30px;top:359.32px;">-17,6</span>
<span class="t r val" style="left:220.80px;top:359.32px;">25,5%</span>
<div style="left:43.20px;top:363.40px;width:184.74px;height:9.90px;background:#e4fcfc"></div>
<span class="t r val" style="left:66.80px;top:369.20px;">7,60</span>
<span class="t c dots" style="left:90.80px;top:368.30px;">......</span>
<span class="t r val" style="left:190.30px;top:369.20px;">-14,9</span>
<span class="t r val" style="left:220.80px;top:369.20px;">26,4%</span>
<span class="t r val" style="left:66.80px;top:379.07px;">6,50</span>
<span class="t c dots" style="left:90.80px;top:378.18px;">......</span>
<span class="t r val" style="left:190.30px;top:379.07px;">-12,5</span>
<span class="t r val" style="left:220.80px;top:379.07px;">27,4%</span>
<span class="t r val" style="left:66.80px;top:388.95px;">5,55</span>
<span class="t c dots" style="left:90.80px;top:388.05px;">......</span>
<span class="t r val" style="left:190.30px;top:388.95px;">-10,5</span>
<span class="t r val" style="left:220.80px;top:388.95px;">28,3%</span>
<span class="t r val" style="left:66.80px;top:398.82px;">4,60</span>
<span class="t c dots" style="left:90.80px;top:397.93px;">......</span>
<span class="t r val" style="left:190.30px;top:398.82px;">-8,88</span>
<span class="t r val" style="left:220.80px;top:398.82px;">29,0%</span>
<span class="t r val" style="left:66.80px;top:408.70px;">3,95</span>
<span class="t c dots" style="left:90.80px;top:407.80px;">......</span>
<span class="t r val" style="left:190.30px;top:408.70px;">-7,50</span>
<span class="t r val" style="left:220.80px;top:408.70px;">29,9%</span>
<span class="t r val" style="left:66.80px;top:418.57px;">3,35</span>
<span class="t c dots" style="left:90.80px;top:417.68px;">......</span>
<span class="t r val" style="left:190.30px;top:418.57px;">-6,35</span>
<span class="t r val" style="left:220.80px;top:418.57px;">30,8%</span>
<span class="t r val" style="left:66.80px;top:428.45px;">2,87</span>
<span class="t c dots" style="left:90.80px;top:427.55px;">......</span>
<span class="t r val" style="left:190.30px;top:428.45px;">-5,39</span>
<span class="t r val" style="left:220.80px;top:428.45px;">31,7%</span>
<span class="t r val" style="left:66.80px;top:438.32px;">2,50</span>
<span class="t c dots" style="left:90.80px;top:437.43px;">......</span>
<span class="t r val" style="left:190.30px;top:438.32px;">-4,59</span>
<span class="t r val" style="left:220.80px;top:438.32px;">32,6%</span>
<span class="t r val" style="left:66.80px;top:448.20px;">2,12</span>
<span class="t c dots" style="left:90.80px;top:447.30px;">......</span>
<span class="t r val" style="left:190.30px;top:448.20px;">-3,92</span>
<span class="t r val" style="left:220.80px;top:448.20px;">33,4%</span>
<span class="t r val" style="left:66.80px;top:458.07px;">1,86</span>
<span class="t c dots" style="left:90.80px;top:457.18px;">......</span>
<span class="t r val" style="left:190.30px;top:458.07px;">-3,36</span>
<span class="t r val" style="left:220.80px;top:458.07px;">34,3%</span>
<span class="t r val" style="left:66.80px;top:467.95px;">1,64</span>
<span class="t c dots" style="left:90.80px;top:467.05px;">......</span>
<span class="t r val" style="left:190.30px;top:467.95px;">-2,89</span>
<span class="t r val" style="left:220.80px;top:467.95px;">35,4%</span>
<span class="t r val" style="left:66.80px;top:477.82px;">1,44</span>
<span class="t c dots" style="left:90.80px;top:476.93px;">......</span>
<span class="t r val" style="left:190.30px;top:477.82px;">-2,49</span>
<span class="t r val" style="left:220.80px;top:477.82px;">36,3%</span>
<span class="t r val" style="left:66.80px;top:487.70px;">1,25</span>
<span class="t c dots" style="left:90.80px;top:486.80px;">......</span>
<span class="t r val" style="left:190.30px;top:487.70px;">-2,16</span>
<span class="t r val" style="left:220.80px;top:487.70px;">37,2%</span>
<span class="t r val" style="left:66.80px;top:497.57px;">1,10</span>
<span class="t c dots" style="left:90.80px;top:496.68px;">......</span>
<span class="t r val" style="left:190.30px;top:497.57px;">-1,87</span>
<span class="t r val" style="left:220.80px;top:497.57px;">38,1%</span>
<span class="t r val" style="left:66.80px;top:507.45px;">0,98</span>
<span class="t c dots" style="left:90.80px;top:506.55px;">......</span>
<span class="t r val" style="left:190.30px;top:507.45px;">-1,63</span>
<span class="t r val" style="left:220.80px;top:507.45px;">39,2%</span>
<span class="t r val" style="left:66.80px;top:517.33px;">0,88</span>
<span class="t c dots" style="left:90.80px;top:516.43px;">......</span>
<span class="t r val" style="left:190.30px;top:517.33px;">-1,42</span>
<span class="t r val" style="left:220.80px;top:517.33px;">40,1%</span>
<span class="t r val" style="left:252.19px;top:128.90px;">0,75</span>
<span class="t c dots" style="left:276.19px;top:128.00px;">......</span>
<span class="t r val" style="left:375.69px;top:128.90px;">2,71</span>
<span class="t r val" style="left:406.19px;top:128.90px;">12,0%</span>
<span class="t r val" style="left:252.19px;top:138.80px;">0,99</span>
<span class="t c dots" style="left:276.19px;top:137.90px;">......</span>
<span class="t r val" style="left:375.69px;top:138.80px;">3,69</span>
<span class="t r val" style="left:406.19px;top:138.80px;">11,9%</span>
<div style="left:227.94px;top:142.90px;width:184.74px;height:9.90px;background:#e4fcfc"></div>
<span class="t r val" style="left:252.19px;top:148.70px;">1,36</span>
<span class="t c dots" style="left:276.19px;top:147.80px;">......</span>
<span class="t r val" style="left:375.69px;top:148.70px;">4,96</span>
<span class="t r val" style="left:406.19px;top:148.70px;">12,0%</span>
<div style="left:227.94px;top:152.80px;width:184.74px;height:9.90px;background:#e4fcfc"></div>
<span class="t r val" style="left:252.19px;top:158.60px;">1,93</span>
<span class="t r val" style="left:283.59px;top:158.60px;">2,45</span>
<span class="t r val" style="left:314.79px;top:158.60px;color:#3434c4">+1</span>
<span class="t r val" style="left:345.59px;top:158.60px;color:#3434c4">-1</span>
<span class="t r val" style="left:375.69px;top:158.60px;">6,56</span>
<span class="t r val" style="left:406.19px;top:158.60px;">12,0%</span>
<div style="left:227.94px;top:162.70px;width:184.74px;height:9.90px;background:#e4fcfc"></div>
<span class="t r val" style="left:252.19px;top:168.50px;">2,65</span>
<span class="t c dots" style="left:276.19px;top:167.60px;">......</span>
<span class="t r val" style="left:375.69px;top:168.50px;">8,54</span>
<span class="t r val" style="left:406.19px;top:168.50px;">12,2%</span>
<div style="left:227.94px;top:172.60px;width:184.74px;height:9.90px;background:#e4fcfc"></div>
<span class="t r val" style="left:252.19px;top:178.40px;">3,70</span>
<span class="t c dots" style="left:276.19px;top:177.50px;">......</span>
<span class="t r val" style="left:375.69px;top:178.40px;">10,9</span>
<span class="t r val" style="left:406.19px;top:178.40px;">12,4%</span>
<div style="left:227.94px;top:182.50px;width:184.74px;height:9.90px;background:#e4fcfc"></div>
<span class="t r val" style="left:252.19px;top:188.30px;">5,10</span>
<span class="t c dots" style="left:276.19px;top:187.40px;">......</span>
<span class="t r val" style="left:314.79px;top:188.30px;color:#3434c4">-1</span>
<span class="t r val" style="left:375.69px;top:188.30px;">13,7</span>
<span class="t r val" style="left:406.19px;top:188.30px;">12,6%</span>
<div style="left:227.94px;top:192.40px;width:184.74px;height:9.90px;background:#e4fcfc"></div>
<span class="t r val" style="left:252.19px;top:198.20px;">7,00</span>
<span class="t c dots" style="left:276.19px;top:197.30px;">......</span>
<span class="t r val" style="left:375.69px;top:198.20px;">17,0</span>
<span class="t r val" style="left:406.19px;top:198.20px;">13,0%</span>
<div style="left:227.94px;top:202.30px;width:184.74px;height:9.90px;background:#e4fcfc"></div>
<span class="t r val" style="left:252.19px;top:208.10px;">9,25</span>
<span class="t c dots" style="left:276.19px;top:207.20px;">......</span>
<span class="t r val" style="left:375.69px;top:208.10px;">20,6</span>
<span class="t r val" style="left:406.19px;top:208.10px;">13,3%</span>
<div style="left:227.94px;top:212.20px;width:184.74px;height:9.90px;background:#fdebfc"></div>
<span class="t r val" style="left:252.19px;top:218.00px;">12,00</span>
<span class="t c dots" style="left:276.19px;top:217.10px;">......</span>
<span class="t r val" style="left:375.69px;top:218.00px;">24,6</span>
<span class="t r val" style="left:406.19px;top:218.00px;">13,7%</span>
<div style="left:227.94px;top:222.10px;width:184.74px;height:9.90px;background:#fdebfc"></div>
<span class="t r val" style="left:252.19px;top:227.90px;">15,50</span>
<span class="t c dots" style="left:276.19px;top:227.00px;">......</span>
<span class="t r val" style="left:375.69px;top:227.90px;">29,0</span>
<span class="t r val" style="left:406.19px;top:227.90px;">14,2%</span>
<div style="left:227.94px;top:232.00px;width:184.74px;height:9.90px;background:#fdebfc"></div>
<span class="t r val" style="left:252.19px;top:237.80px;">19,35</span>
<span class="t c dots" style="left:276.19px;top:236.90px;">......</span>
<span class="t r val" style="left:375.69px;top:237.80px;">33,5</span>
<span class="t r val" style="left:406.19px;top:237.80px;">14,7%</span>
<div style="left:227.94px;top:241.90px;width:184.74px;height:9.90px;background:#fdebfc"></div>
<span class="t r val" style="left:252.19px;top:247.70px;">23,95</span>
<span class="t c dots" style="left:276.19px;top:246.80px;">......</span>
<span class="t r val" style="left:375.69px;top:247.70px;">38,2</span>
<span class="t r val" style="left:406.19px;top:247.70px;">15,2%</span>
<div style="left:227.94px;top:251.80px;width:184.74px;height:9.90px;background:#fdebfc"></div>
<span class="t r val" style="left:252.19px;top:257.60px;">28,70</span>
<span class="t c dots" style="left:276.19px;top:256.70px;">......</span>
<span class="t r val" style="left:375.69px;top:257.60px;">42,9</span>
<span class="t r val" style="left:406.19px;top:257.60px;">15,6%</span>
<div style="left:227.94px;top:261.70px;width:184.74px;height:9.90px;background:#fdebfc"></div>
<span class="t r val" style="left:252.19px;top:267.50px;">34,35</span>
<span class="t c dots" style="left:276.19px;top:266.60px;">......</span>
<span class="t r val" style="left:375.69px;top:267.50px;">47,7</span>
<span class="t r val" style="left:406.19px;top:267.50px;">16,2%</span>
<div style="left:227.94px;top:271.60px;width:184.74px;height:9.90px;background:#f5d6f5"></div>
<span class="t r val" style="left:252.19px;top:277.40px;">40,10</span>
<span class="t c dots" style="left:276.19px;top:276.50px;">......</span>
<span class="t r val" style="left:375.69px;top:277.40px;">52,3</span>
<span class="t r val" style="left:406.19px;top:277.40px;">16,7%</span>
<div style="left:227.94px;top:281.50px;width:184.74px;height:9.90px;background:#fdebfc"></div>
<span class="t r val" style="left:252.19px;top:287.30px;">46,35</span>
<span class="t c dots" style="left:276.19px;top:286.40px;">......</span>
<span class="t r val" style="left:375.69px;top:287.30px;">56,7</span>
<span class="t r val" style="left:406.19px;top:287.30px;">17,2%</span>
<div style="left:227.94px;top:291.40px;width:184.74px;height:9.90px;background:#fdebfc"></div>
<span class="t r val" style="left:252.19px;top:297.20px;">52,95</span>
<span class="t c dots" style="left:276.19px;top:296.30px;">......</span>
<span class="t r val" style="left:375.69px;top:297.20px;">60,9</span>
<span class="t r val" style="left:406.19px;top:297.20px;">17,7%</span>
<div style="left:227.94px;top:301.30px;width:184.74px;height:9.90px;background:#fdebfc"></div>
<span class="t r val" style="left:252.19px;top:307.10px;">59,75</span>
<span class="t c dots" style="left:276.19px;top:306.20px;">......</span>
<span class="t r val" style="left:375.69px;top:307.10px;">64,8</span>
<span class="t r val" style="left:406.19px;top:307.10px;">18,3%</span>
<div style="left:227.94px;top:311.20px;width:184.74px;height:9.90px;background:#fdebfc"></div>
<span class="t r val" style="left:252.19px;top:317.00px;">67,00</span>
<span class="t c dots" style="left:276.19px;top:316.10px;">......</span>
<span class="t r val" style="left:375.69px;top:317.00px;">68,5</span>
<span class="t r val" style="left:406.19px;top:317.00px;">18,8%</span>
<div style="left:227.94px;top:323.90px;width:184.74px;height:9.90px;background:#fdebfc"></div>
<span class="t r val" style="left:252.19px;top:329.70px;">36,30</span>
<span class="t c dots" style="left:276.19px;top:328.80px;">......</span>
<span class="t r val" style="left:375.69px;top:329.70px;">-37,1</span>
<span class="t r val" style="left:406.19px;top:329.70px;">17,3%</span>
<div style="left:227.94px;top:333.77px;width:184.74px;height:9.90px;background:#fdebfc"></div>
<span class="t r val" style="left:252.19px;top:339.57px;">33,75</span>
<span class="t c dots" style="left:276.19px;top:338.68px;">......</span>
<span class="t r val" style="left:375.69px;top:339.57px;">-34,0</span>
<span class="t r val" style="left:406.19px;top:339.57px;">18,2%</span>
<div style="left:227.94px;top:343.65px;width:184.74px;height:9.90px;background:#fdebfc"></div>
<span class="t r val" style="left:252.19px;top:349.45px;">30,45</span>
<span class="t c dots" style="left:276.19px;top:348.55px;">......</span>
<span class="t r val" style="left:375.69px;top:349.45px;">-31,2</span>
<span class="t r val" style="left:406.19px;top:349.45px;">18,4%</span>
<div style="left:227.94px;top:353.52px;width:184.74px;height:9.90px;background:#fdebfc"></div>
<span class="t r val" style="left:252.19px;top:359.32px;">27,90</span>
<span class="t c dots" style="left:276.19px;top:358.43px;">......</span>
<span class="t r val" style="left:375.69px;top:359.32px;">-28,7</span>
<span class="t r val" style="left:406.19px;top:359.32px;">18,9%</span>
<div style="left:227.94px;top:363.40px;width:184.74px;height:9.90px;background:#fdebfc"></div>
<span class="t r val" style="left:252.19px;top:369.20px;">25,65</span>
<span class="t c dots" style="left:276.19px;top:368.30px;">......</span>
<span class="t r val" style="left:375.69px;top:369.20px;">-26,3</span>
<span class="t r val" style="left:406.19px;top:369.20px;">19,5%</span>
<div style="left:227.94px;top:373.27px;width:184.74px;height:9.90px;background:#fdebfc"></div>
<span class="t r val" style="left:252.19px;top:379.07px;">23,65</span>
<span class="t c dots" style="left:276.19px;top:378.18px;">......</span>
<span class="t r val" style="left:375.69px;top:379.07px;">-24,2</span>
<span class="t r val" style="left:406.19px;top:379.07px;">20,0%</span>
<div style="left:227.94px;top:383.15px;width:184.74px;height:9.90px;background:#e4fcfc"></div>
<span class="t r val" style="left:252.19px;top:388.95px;">21,65</span>
<span class="t c dots" style="left:276.19px;top:388.05px;">......</span>
<span class="t r val" style="left:375.69px;top:388.95px;">-22,3</span>
<span class="t r val" style="left:406.19px;top:388.95px;">20,5%</span>
<div style="left:227.94px;top:393.02px;width:184.74px;height:9.90px;background:#e4fcfc"></div>
<span class="t r val" style="left:252.19px;top:398.82px;">19,90</span>
<span class="t c dots" style="left:276.19px;top:397.93px;">......</span>
<span class="t r val" style="left:375.69px;top:398.82px;">-20,5</span>
<span class="t r val" style="left:406.19px;top:398.82px;">21,0%</span>
<div style="left:227.94px;top:402.90px;width:184.74px;height:9.90px;background:#e4fcfc"></div>
<span class="t r val" style="left:252.19px;top:408.70px;">18,40</span>
<span class="t c dots" style="left:276.19px;top:407.80px;">......</span>
<span class="t r val" style="left:375.69px;top:408.70px;">-18,9</span>
<span class="t r val" style="left:406.19px;top:408.70px;">21,5%</span>
<div style="left:227.94px;top:412.77px;width:184.74px;height:9.90px;background:#e4fcfc"></div>
<span class="t r val" style="left:252.19px;top:418.57px;">16,90</span>
<span class="t c dots" style="left:276.19px;top:417.68px;">......</span>
<span class="t r val" style="left:375.69px;top:418.57px;">-17,4</span>
<span class="t r val" style="left:406.19px;top:418.57px;">22,0%</span>
<div style="left:227.94px;top:422.65px;width:184.74px;height:9.90px;background:#e4fcfc"></div>
<span class="t r val" style="left:252.19px;top:428.45px;">15,65</span>
<span class="t c dots" style="left:276.19px;top:427.55px;">......</span>
<span class="t r val" style="left:375.69px;top:428.45px;">-16,1</span>
<span class="t r val" style="left:406.19px;top:428.45px;">22,5%</span>
<div style="left:227.94px;top:432.52px;width:184.74px;height:9.90px;background:#e4fcfc"></div>
<span class="t r val" style="left:252.19px;top:438.32px;">14,30</span>
<span class="t c dots" style="left:276.19px;top:437.43px;">......</span>
<span class="t r val" style="left:375.69px;top:438.32px;">-14,9</span>
<span class="t r val" style="left:406.19px;top:438.32px;">23,0%</span>
<span class="t r val" style="left:252.19px;top:448.20px;">13,15</span>
<span class="t c dots" style="left:276.19px;top:447.30px;">......</span>
<span class="t r val" style="left:375.69px;top:448.20px;">-13,7</span>
<span class="t r val" style="left:406.19px;top:448.20px;">23,5%</span>
<span class="t r val" style="left:252.19px;top:458.07px;">12,15</span>
<span class="t c dots" style="left:276.19px;top:457.18px;">......</span>
<span class="t r val" style="left:375.69px;top:458.07px;">-12,7</span>
<span class="t r val" style="left:406.19px;top:458.07px;">23,9%</span>
<span class="t r val" style="left:252.19px;top:467.95px;">11,25</span>
<span class="t r val" style="left:283.59px;top:467.95px;">6,05</span>
<span class="t r val" style="left:314.79px;top:467.95px;color:#3434c4">+2</span>
<span class="t r val" style="left:345.59px;top:467.95px;color:#3434c4">-2</span>
<span class="t r val" style="left:375.69px;top:467.95px;">-11,7</span>
<span class="t r val" style="left:406.19px;top:467.95px;">24,4%</span>
<span class="t r val" style="left:252.19px;top:477.82px;">10,40</span>
<span class="t c dots" style="left:276.19px;top:476.93px;">......</span>
<span class="t r val" style="left:375.69px;top:477.82px;">-10,7</span>
<span class="t r val" style="left:406.19px;top:477.82px;">25,0%</span>
<span class="t r val" style="left:252.19px;top:487.70px;">9,50</span>
<span class="t c dots" style="left:276.19px;top:486.80px;">......</span>
<span class="t r val" style="left:375.69px;top:487.70px;">-9,87</span>
<span class="t r val" style="left:406.19px;top:487.70px;">25,3%</span>
<span class="t r val" style="left:252.19px;top:497.57px;">8,75</span>
<span class="t c dots" style="left:276.19px;top:496.68px;">......</span>
<span class="t r val" style="left:375.69px;top:497.57px;">-9,07</span>
<span class="t r val" style="left:406.19px;top:497.57px;">25,8%</span>
<span class="t r val" style="left:252.19px;top:507.45px;">8,25</span>
<span class="t c dots" style="left:276.19px;top:506.55px;">......</span>
<span class="t r val" style="left:375.69px;top:507.45px;">-8,34</span>
<span class="t r val" style="left:406.19px;top:507.45px;">26,4%</span>
<span class="t r val" style="left:252.19px;top:517.33px;">7,55</span>
<span class="t c dots" style="left:276.19px;top:516.43px;">......</span>
<span class="t r val" style="left:375.69px;top:517.33px;">-7,68</span>
<span class="t r val" style="left:406.19px;top:517.33px;">26,7%</span>
<div style="left:412.68px;top:123.10px;width:184.74px;height:9.90px;background:#e4fcfc"></div>
<span class="t r val" style="left:436.93px;top:128.90px;">4,70</span>
<span class="t c dots" style="left:460.93px;top:128.00px;">......</span>
<span class="t r val" style="left:560.43px;top:128.90px;">9,32</span>
<span class="t r val" style="left:590.93px;top:128.90px;">12,4%</span>
<div style="left:412.68px;top:133.00px;width:184.74px;height:9.90px;background:#e4fcfc"></div>
<span class="t r val" style="left:436.93px;top:138.80px;">5,75</span>
<span class="t c dots" style="left:460.93px;top:137.90px;">......</span>
<span class="t r val" style="left:560.43px;top:138.80px;">11,1</span>
<span class="t r val" style="left:590.93px;top:138.80px;">12,5%</span>
<div style="left:412.68px;top:142.90px;width:184.74px;height:9.90px;background:#e4fcfc"></div>
<span class="t r val" style="left:436.93px;top:148.70px;">7,10</span>
<span class="t c dots" style="left:460.93px;top:147.80px;">......</span>
<span class="t r val" style="left:560.43px;top:148.70px;">13,1</span>
<span class="t r val" style="left:590.93px;top:148.70px;">12,7%</span>
<div style="left:412.68px;top:152.80px;width:184.74px;height:9.90px;background:#e4fcfc"></div>
<span class="t r val" style="left:436.93px;top:158.60px;">8,90</span>
<span class="t c dots" style="left:460.93px;top:157.70px;">......</span>
<span class="t r val" style="left:560.43px;top:158.60px;">15,2</span>
<span class="t r val" style="left:590.93px;top:158.60px;">12,9%</span>
<div style="left:412.68px;top:162.70px;width:184.74px;height:9.90px;background:#e4fcfc"></div>
<span class="t r val" style="left:436.93px;top:168.50px;">10,75</span>
<span class="t c dots" style="left:460.93px;top:167.60px;">......</span>
<span class="t r val" style="left:560.43px;top:168.50px;">17,6</span>
<span class="t r val" style="left:590.93px;top:168.50px;">13,1%</span>
<div style="left:412.68px;top:172.60px;width:184.74px;height:9.90px;background:#e4fcfc"></div>
<span class="t r val" style="left:436.93px;top:178.40px;">13,15</span>
<span class="t c dots" style="left:460.93px;top:177.50px;">......</span>
<span class="t r val" style="left:560.43px;top:178.40px;">20,2</span>
<span class="t r val" style="left:590.93px;top:178.40px;">13,3%</span>
<div style="left:412.68px;top:182.50px;width:184.74px;height:9.90px;background:#fdebfc"></div>
<span class="t r val" style="left:436.93px;top:188.30px;">15,90</span>
<span class="t c dots" style="left:460.93px;top:187.40px;">......</span>
<span class="t r val" style="left:560.43px;top:188.30px;">23,0</span>
<span class="t r val" style="left:590.93px;top:188.30px;">13,6%</span>
<div style="left:412.68px;top:192.40px;width:184.74px;height:9.90px;background:#fdebfc"></div>
<span class="t r val" style="left:436.93px;top:198.20px;">19,00</span>
<span class="t c dots" style="left:460.93px;top:197.30px;">......</span>
<span class="t r val" style="left:560.43px;top:198.20px;">26,0</span>
<span class="t r val" style="left:590.93px;top:198.20px;">13,9%</span>
<div style="left:412.68px;top:202.30px;width:184.74px;height:9.90px;background:#fdebfc"></div>
<span class="t r val" style="left:436.93px;top:208.10px;">22,50</span>
<span class="t c dots" style="left:460.93px;top:207.20px;">......</span>
<span class="t r val" style="left:560.43px;top:208.10px;">29,1</span>
<span class="t r val" style="left:590.93px;top:208.10px;">14,2%</span>
<div style="left:412.68px;top:212.20px;width:184.74px;height:9.90px;background:#fdebfc"></div>
<span class="t r val" style="left:436.93px;top:218.00px;">26,25</span>
<span class="t c dots" style="left:460.93px;top:217.10px;">......</span>
<span class="t r val" style="left:560.43px;top:218.00px;">32,3</span>
<span class="t r val" style="left:590.93px;top:218.00px;">14,5%</span>
<div style="left:412.68px;top:222.10px;width:184.74px;height:9.90px;background:#fdebfc"></div>
<span class="t r val" style="left:436.93px;top:227.90px;">30,40</span>
<span class="t c dots" style="left:460.93px;top:227.00px;">......</span>
<span class="t r val" style="left:560.43px;top:227.90px;">35,6</span>
<span class="t r val" style="left:590.93px;top:227.90px;">14,8%</span>
<div style="left:412.68px;top:232.00px;width:184.74px;height:9.90px;background:#fdebfc"></div>
<span class="t r val" style="left:436.93px;top:237.80px;">35,00</span>
<span class="t c dots" style="left:460.93px;top:236.90px;">......</span>
<span class="t r val" style="left:560.43px;top:237.80px;">38,9</span>
<span class="t r val" style="left:590.93px;top:237.80px;">15,2%</span>
<div style="left:412.68px;top:241.90px;width:184.74px;height:9.90px;background:#fdebfc"></div>
<span class="t r val" style="left:436.93px;top:247.70px;">40,15</span>
<span class="t c dots" style="left:460.93px;top:246.80px;">......</span>
<span class="t r val" style="left:560.43px;top:247.70px;">42,2</span>
<span class="t r val" style="left:590.93px;top:247.70px;">15,6%</span>
<div style="left:412.68px;top:251.80px;width:184.74px;height:9.90px;background:#fdebfc"></div>
<span class="t r val" style="left:436.93px;top:257.60px;">45,15</span>
<span class="t c dots" style="left:460.93px;top:256.70px;">......</span>
<span class="t r val" style="left:560.43px;top:257.60px;">45,6</span>
<span class="t r val" style="left:590.93px;top:257.60px;">15,8%</span>
<div style="left:412.68px;top:261.70px;width:184.74px;height:9.90px;background:#fdebfc"></div>
<span class="t r val" style="left:436.93px;top:267.50px;">51,00</span>
<span class="t c dots" style="left:460.93px;top:266.60px;">......</span>
<span class="t r val" style="left:560.43px;top:267.50px;">48,9</span>
<span class="t r val" style="left:590.93px;top:267.50px;">16,3%</span>
<div style="left:412.68px;top:271.60px;width:184.74px;height:9.90px;background:#f5d6f5"></div>
<span class="t r val" style="left:436.93px;top:277.40px;">56,90</span>
<span class="t c dots" style="left:460.93px;top:276.50px;">......</span>
<span class="t r val" style="left:560.43px;top:277.40px;">52,1</span>
<span class="t r val" style="left:590.93px;top:277.40px;">16,7%</span>
<div style="left:412.68px;top:281.50px;width:184.74px;height:9.90px;background:#fdebfc"></div>
<span class="t r val" style="left:436.93px;top:287.30px;">63,15</span>
<span class="t c dots" style="left:460.93px;top:286.40px;">......</span>
<span class="t r val" style="left:560.43px;top:287.30px;">55,3</span>
<span class="t r val" style="left:590.93px;top:287.30px;">17,1%</span>
<div style="left:412.68px;top:291.40px;width:184.74px;height:9.90px;background:#fdebfc"></div>
<span class="t r val" style="left:436.93px;top:297.20px;">69,90</span>
<span class="t c dots" style="left:460.93px;top:296.30px;">......</span>
<span class="t r val" style="left:560.43px;top:297.20px;">58,3</span>
<span class="t r val" style="left:590.93px;top:297.20px;">17,5%</span>
<div style="left:412.68px;top:301.30px;width:184.74px;height:9.90px;background:#fdebfc"></div>
<span class="t r val" style="left:436.93px;top:307.10px;">76,25</span>
<span class="t c dots" style="left:460.93px;top:306.20px;">......</span>
<span class="t r val" style="left:560.43px;top:307.10px;">61,3</span>
<span class="t r val" style="left:590.93px;top:307.10px;">17,8%</span>
<div style="left:412.68px;top:311.20px;width:184.74px;height:9.90px;background:#fdebfc"></div>
<span class="t r val" style="left:436.93px;top:317.00px;">83,25</span>
<span class="t c dots" style="left:460.93px;top:316.10px;">......</span>
<span class="t r val" style="left:560.43px;top:317.00px;">64,1</span>
<span class="t r val" style="left:590.93px;top:317.00px;">18,2%</span>
<div style="left:412.68px;top:323.90px;width:184.74px;height:9.90px;background:#fdebfc"></div>
<span class="t r val" style="left:436.93px;top:329.70px;">53,20</span>
<span class="t c dots" style="left:460.93px;top:328.80px;">......</span>
<span class="t r val" style="left:560.43px;top:329.70px;">-39,1</span>
<span class="t r val" style="left:590.93px;top:329.70px;">17,2%</span>
<div style="left:412.68px;top:333.77px;width:184.74px;height:9.90px;background:#fdebfc"></div>
<span class="t r val" style="left:436.93px;top:339.57px;">50,05</span>
<span class="t c dots" style="left:460.93px;top:338.68px;">......</span>
<span class="t r val" style="left:560.43px;top:339.57px;">-36,8</span>
<span class="t r val" style="left:590.93px;top:339.57px;">17,6%</span>
<div style="left:412.68px;top:343.65px;width:184.74px;height:9.90px;background:#fdebfc"></div>
<span class="t r val" style="left:436.93px;top:349.45px;">47,00</span>
<span class="t c dots" style="left:460.93px;top:348.55px;">......</span>
<span class="t r val" style="left:560.43px;top:349.45px;">-34,6</span>
<span class="t r val" style="left:590.93px;top:349.45px;">18,0%</span>
<div style="left:412.68px;top:353.52px;width:184.74px;height:9.90px;background:#fdebfc"></div>
<span class="t r val" style="left:436.93px;top:359.32px;">44,25</span>
<span class="t c dots" style="left:460.93px;top:358.43px;">......</span>
<span class="t r val" style="left:560.43px;top:359.32px;">-32,5</span>
<span class="t r val" style="left:590.93px;top:359.32px;">18,4%</span>
<div style="left:412.68px;top:363.40px;width:184.74px;height:9.90px;background:#fdebfc"></div>
<span class="t r val" style="left:436.93px;top:369.20px;">41,50</span>
<span class="t c dots" style="left:460.93px;top:368.30px;">......</span>
<span class="t r val" style="left:560.43px;top:369.20px;">-30,6</span>
<span class="t r val" style="left:590.93px;top:369.20px;">18,8%</span>
<div style="left:412.68px;top:373.27px;width:184.74px;height:9.90px;background:#fdebfc"></div>
<span class="t r val" style="left:436.93px;top:379.07px;">39,00</span>
<span class="t c dots" style="left:460.93px;top:378.18px;">......</span>
<span class="t r val" style="left:560.43px;top:379.07px;">-28,8</span>
<span class="t r val" style="left:590.93px;top:379.07px;">19,1%</span>
<div style="left:412.68px;top:383.15px;width:184.74px;height:9.90px;background:#fdebfc"></div>
<span class="t r val" style="left:436.93px;top:388.95px;">37,00</span>
<span class="t c dots" style="left:460.93px;top:388.05px;">......</span>
<span class="t r val" style="left:560.43px;top:388.95px;">-27,1</span>
<span class="t r val" style="left:590.93px;top:388.95px;">19,6%</span>
<div style="left:412.68px;top:393.02px;width:184.74px;height:9.90px;background:#fdebfc"></div>
<span class="t r val" style="left:436.93px;top:398.82px;">34,65</span>
<span class="t c dots" style="left:460.93px;top:397.93px;">......</span>
<span class="t r val" style="left:560.43px;top:398.82px;">-25,5</span>
<span class="t r val" style="left:590.93px;top:398.82px;">19,9%</span>
<div style="left:412.68px;top:402.90px;width:184.74px;height:9.90px;background:#e4fcfc"></div>
<span class="t r val" style="left:436.93px;top:408.70px;">32,65</span>
<span class="t c dots" style="left:460.93px;top:407.80px;">......</span>
<span class="t r val" style="left:560.43px;top:408.70px;">-24,0</span>
<span class="t r val" style="left:590.93px;top:408.70px;">20,4%</span>
<div style="left:412.68px;top:412.77px;width:184.74px;height:9.90px;background:#e4fcfc"></div>
<span class="t r val" style="left:436.93px;top:418.57px;">30,50</span>
<span class="t c dots" style="left:460.93px;top:417.68px;">......</span>
<span class="t r val" style="left:560.43px;top:418.57px;">-22,5</span>
<span class="t r val" style="left:590.93px;top:418.57px;">20,7%</span>
<div style="left:412.68px;top:422.65px;width:184.74px;height:9.90px;background:#e4fcfc"></div>
<span class="t r val" style="left:436.93px;top:428.45px;">29,05</span>
<span class="t c dots" style="left:460.93px;top:427.55px;">......</span>
<span class="t r val" style="left:560.43px;top:428.45px;">-21,2</span>
<span class="t r val" style="left:590.93px;top:428.45px;">21,1%</span>
<div style="left:412.68px;top:432.52px;width:184.74px;height:9.90px;background:#e4fcfc"></div>
<span class="t r val" style="left:436.93px;top:438.32px;">27,25</span>
<span class="t c dots" style="left:460.93px;top:437.43px;">......</span>
<span class="t r val" style="left:560.43px;top:438.32px;">-20,0</span>
<span class="t r val" style="left:590.93px;top:438.32px;">21,4%</span>
<div style="left:412.68px;top:442.40px;width:184.74px;height:9.90px;background:#e4fcfc"></div>
<span class="t r val" style="left:436.93px;top:448.20px;">25,65</span>
<span class="t c dots" style="left:460.93px;top:447.30px;">......</span>
<span class="t r val" style="left:560.43px;top:448.20px;">-18,8</span>
<span class="t r val" style="left:590.93px;top:448.20px;">21,8%</span>
<div style="left:412.68px;top:452.27px;width:184.74px;height:9.90px;background:#e4fcfc"></div>
<span class="t r val" style="left:436.93px;top:458.07px;">24,15</span>
<span class="t c dots" style="left:460.93px;top:457.18px;">......</span>
<span class="t r val" style="left:560.43px;top:458.07px;">-17,8</span>
<span class="t r val" style="left:590.93px;top:458.07px;">22,2%</span>
<div style="left:412.68px;top:462.15px;width:184.74px;height:9.90px;background:#e4fcfc"></div>
<span class="t r val" style="left:436.93px;top:467.95px;">23,00</span>
<span class="t c dots" style="left:460.93px;top:467.05px;">......</span>
<span class="t r val" style="left:560.43px;top:467.95px;">-16,7</span>
<span class="t r val" style="left:590.93px;top:467.95px;">22,6%</span>
<div style="left:412.68px;top:472.02px;width:184.74px;height:9.90px;background:#e4fcfc"></div>
<span class="t r val" style="left:436.93px;top:477.82px;">21,55</span>
<span class="t c dots" style="left:460.93px;top:476.93px;">......</span>
<span class="t r val" style="left:560.43px;top:477.82px;">-15,8</span>
<span class="t r val" style="left:590.93px;top:477.82px;">22,9%</span>
<div style="left:412.68px;top:481.90px;width:184.74px;height:9.90px;background:#e4fcfc"></div>
<span class="t r val" style="left:436.93px;top:487.70px;">20,25</span>
<span class="t c dots" style="left:460.93px;top:486.80px;">......</span>
<span class="t r val" style="left:560.43px;top:487.70px;">-14,9</span>
<span class="t r val" style="left:590.93px;top:487.70px;">23,3%</span>
<span class="t r val" style="left:436.93px;top:497.57px;">19,25</span>
<span class="t c dots" style="left:460.93px;top:496.68px;">......</span>
<span class="t r val" style="left:560.43px;top:497.57px;">-14,1</span>
<span class="t r val" style="left:590.93px;top:497.57px;">23,8%</span>
<span class="t r val" style="left:436.93px;top:507.45px;">18,00</span>
<span class="t c dots" style="left:460.93px;top:506.55px;">......</span>
<span class="t r val" style="left:560.43px;top:507.45px;">-13,3</span>
<span class="t r val" style="left:590.93px;top:507.45px;">24,0%</span>
<span class="t r val" style="left:436.93px;top:517.33px;">16,90</span>
<span class="t c dots" style="left:460.93px;top:516.43px;">......</span>
<span class="t r val" style="left:560.43px;top:517.33px;">-12,5</span>
<span class="t r val" style="left:590.93px;top:517.33px;">24,3%</span>
<div style="left:597.42px;top:123.10px;width:184.74px;height:9.90px;background:#e4fcfc"></div>
<span class="t r val" style="left:621.67px;top:128.90px;">9,90</span>
<span class="t c dots" style="left:645.67px;top:128.00px;">......</span>
<span class="t r val" style="left:745.17px;top:128.90px;">15,0</span>
<span class="t r val" style="left:775.67px;top:128.90px;">13,0%</span>
<div style="left:597.42px;top:133.00px;width:184.74px;height:9.90px;background:#e4fcfc"></div>
<span class="t r val" style="left:621.67px;top:138.80px;">11,40</span>
<span class="t c dots" style="left:645.67px;top:137.90px;">......</span>
<span class="t r val" style="left:745.17px;top:138.80px;">17,0</span>
<span class="t r val" style="left:775.67px;top:138.80px;">13,1%</span>
<div style="left:597.42px;top:142.90px;width:184.74px;height:9.90px;background:#e4fcfc"></div>
<span class="t r val" style="left:621.67px;top:148.70px;">13,60</span>
<span class="t c dots" style="left:645.67px;top:147.80px;">......</span>
<span class="t r val" style="left:745.17px;top:148.70px;">19,1</span>
<span class="t r val" style="left:775.67px;top:148.70px;">13,4%</span>
<div style="left:597.42px;top:152.80px;width:184.74px;height:9.90px;background:#e4fcfc"></div>
<span class="t r val" style="left:621.67px;top:158.60px;">16,00</span>
<span class="t c dots" style="left:645.67px;top:157.70px;">......</span>
<span class="t r val" style="left:745.17px;top:158.60px;">21,4</span>
<span class="t r val" style="left:775.67px;top:158.60px;">13,5%</span>
<div style="left:597.42px;top:162.70px;width:184.74px;height:9.90px;background:#fdebfc"></div>
<span class="t r val" style="left:621.67px;top:168.50px;">18,65</span>
<span class="t c dots" style="left:645.67px;top:167.60px;">......</span>
<span class="t r val" style="left:745.17px;top:168.50px;">23,7</span>
<span class="t r val" style="left:775.67px;top:168.50px;">13,8%</span>
<div style="left:597.42px;top:172.60px;width:184.74px;height:9.90px;background:#fdebfc"></div>
<span class="t r val" style="left:621.67px;top:178.40px;">21,75</span>
<span class="t c dots" style="left:645.67px;top:177.50px;">......</span>
<span class="t r val" style="left:745.17px;top:178.40px;">26,2</span>
<span class="t r val" style="left:775.67px;top:178.40px;">14,1%</span>
<div style="left:597.42px;top:182.50px;width:184.74px;height:9.90px;background:#fdebfc"></div>
<span class="t r val" style="left:621.67px;top:188.30px;">25,15</span>
<span class="t c dots" style="left:645.67px;top:187.40px;">......</span>
<span class="t r val" style="left:745.17px;top:188.30px;">28,7</span>
<span class="t r val" style="left:775.67px;top:188.30px;">14,3%</span>
<div style="left:597.42px;top:192.40px;width:184.74px;height:9.90px;background:#fdebfc"></div>
<span class="t r val" style="left:621.67px;top:198.20px;">28,75</span>
<span class="t c dots" style="left:645.67px;top:197.30px;">......</span>
<span class="t r val" style="left:745.17px;top:198.20px;">31,4</span>
<span class="t r val" style="left:775.67px;top:198.20px;">14,6%</span>
<div style="left:597.42px;top:202.30px;width:184.74px;height:9.90px;background:#fdebfc"></div>
<span class="t r val" style="left:621.67px;top:208.10px;">32,75</span>
<span class="t c dots" style="left:645.67px;top:207.20px;">......</span>
<span class="t r val" style="left:745.17px;top:208.10px;">34,0</span>
<span class="t r val" style="left:775.67px;top:208.10px;">14,9%</span>
<div style="left:597.42px;top:212.20px;width:184.74px;height:9.90px;background:#fdebfc"></div>
<span class="t r val" style="left:621.67px;top:218.00px;">37,00</span>
<span class="t c dots" style="left:645.67px;top:217.10px;">......</span>
<span class="t r val" style="left:745.17px;top:218.00px;">36,7</span>
<span class="t r val" style="left:775.67px;top:218.00px;">15,1%</span>
<div style="left:597.42px;top:222.10px;width:184.74px;height:9.90px;background:#fdebfc"></div>
<span class="t r val" style="left:621.67px;top:227.90px;">41,50</span>
<span class="t c dots" style="left:645.67px;top:227.00px;">......</span>
<span class="t r val" style="left:745.17px;top:227.90px;">39,5</span>
<span class="t r val" style="left:775.67px;top:227.90px;">15,4%</span>
<div style="left:597.42px;top:232.00px;width:184.74px;height:9.90px;background:#fdebfc"></div>
<span class="t r val" style="left:621.67px;top:237.80px;">46,50</span>
<span class="t c dots" style="left:645.67px;top:236.90px;">......</span>
<span class="t r val" style="left:745.17px;top:237.80px;">42,2</span>
<span class="t r val" style="left:775.67px;top:237.80px;">15,7%</span>
<div style="left:597.42px;top:241.90px;width:184.74px;height:9.90px;background:#fdebfc"></div>
<span class="t r val" style="left:621.67px;top:247.70px;">51,50</span>
<span class="t c dots" style="left:645.67px;top:246.80px;">......</span>
<span class="t r val" style="left:745.17px;top:247.70px;">44,9</span>
<span class="t r val" style="left:775.67px;top:247.70px;">16,0%</span>
<div style="left:597.42px;top:251.80px;width:184.74px;height:9.90px;background:#fdebfc"></div>
<span class="t r val" style="left:621.67px;top:257.60px;">57,15</span>
<span class="t c dots" style="left:645.67px;top:256.70px;">......</span>
<span class="t r val" style="left:745.17px;top:257.60px;">47,6</span>
<span class="t r val" style="left:775.67px;top:257.60px;">16,4%</span>
<div style="left:597.42px;top:261.70px;width:184.74px;height:9.90px;background:#fdebfc"></div>
<span class="t r val" style="left:621.67px;top:267.50px;">62,75</span>
<span class="t c dots" style="left:645.67px;top:266.60px;">......</span>
<span class="t r val" style="left:745.17px;top:267.50px;">50,2</span>
<span class="t r val" style="left:775.67px;top:267.50px;">16,7%</span>
<div style="left:597.42px;top:271.60px;width:184.74px;height:9.90px;background:#f5d6f5"></div>
<span class="t r val" style="left:621.67px;top:277.40px;">68,20</span>
<span class="t c dots" style="left:645.67px;top:276.50px;">......</span>
<span class="t r val" style="left:745.17px;top:277.40px;">52,8</span>
<span class="t r val" style="left:775.67px;top:277.40px;">16,9%</span>
<div style="left:597.42px;top:281.50px;width:184.74px;height:9.90px;background:#fdebfc"></div>
<span class="t r val" style="left:621.67px;top:287.30px;">74,90</span>
<span class="t c dots" style="left:645.67px;top:286.40px;">......</span>
<span class="t r val" style="left:745.17px;top:287.30px;">55,3</span>
<span class="t r val" style="left:775.67px;top:287.30px;">17,3%</span>
<div style="left:597.42px;top:291.40px;width:184.74px;height:9.90px;background:#fdebfc"></div>
<span class="t r val" style="left:621.67px;top:297.20px;">81,45</span>
<span class="t c dots" style="left:645.67px;top:296.30px;">......</span>
<span class="t r val" style="left:745.17px;top:297.20px;">57,8</span>
<span class="t r val" style="left:775.67px;top:297.20px;">17,6%</span>
<div style="left:597.42px;top:301.30px;width:184.74px;height:9.90px;background:#fdebfc"></div>
<span class="t r val" style="left:621.67px;top:307.10px;">87,95</span>
<span class="t c dots" style="left:645.67px;top:306.20px;">......</span>
<span class="t r val" style="left:745.17px;top:307.10px;">60,1</span>
<span class="t r val" style="left:775.67px;top:307.10px;">18,0%</span>
<div style="left:597.42px;top:311.20px;width:184.74px;height:9.90px;background:#fdebfc"></div>
<span class="t r val" style="left:621.67px;top:317.00px;">94,65</span>
<span class="t c dots" style="left:645.67px;top:316.10px;">......</span>
<span class="t r val" style="left:745.17px;top:317.00px;">62,4</span>
<span class="t r val" style="left:775.67px;top:317.00px;">18,3%</span>
<div style="left:597.42px;top:323.90px;width:184.74px;height:9.90px;background:#fdebfc"></div>
<span class="t r val" style="left:621.67px;top:329.70px;">64,95</span>
<span class="t c dots" style="left:645.67px;top:328.80px;">......</span>
<span class="t r val" style="left:745.17px;top:329.70px;">-39,5</span>
<span class="t r val" style="left:775.67px;top:329.70px;">17,4%</span>
<div style="left:597.42px;top:333.77px;width:184.74px;height:9.90px;background:#fdebfc"></div>
<span class="t r val" style="left:621.67px;top:339.57px;">61,65</span>
<span class="t c dots" style="left:645.67px;top:338.68px;">......</span>
<span class="t r val" style="left:745.17px;top:339.57px;">-37,6</span>
<span class="t r val" style="left:775.67px;top:339.57px;">17,9%</span>
<div style="left:597.42px;top:343.65px;width:184.74px;height:9.90px;background:#fdebfc"></div>
<span class="t r val" style="left:621.67px;top:349.45px;">58,40</span>
<span class="t c dots" style="left:645.67px;top:348.55px;">......</span>
<span class="t r val" style="left:745.17px;top:349.45px;">-35,7</span>
<span class="t r val" style="left:775.67px;top:349.45px;">18,1%</span>
<div style="left:597.42px;top:353.52px;width:184.74px;height:9.90px;background:#fdebfc"></div>
<span class="t r val" style="left:621.67px;top:359.32px;">55,90</span>
<span class="t c dots" style="left:645.67px;top:358.43px;">......</span>
<span class="t r val" style="left:745.17px;top:359.32px;">-33,9</span>
<span class="t r val" style="left:775.67px;top:359.32px;">18,5%</span>
<div style="left:597.42px;top:363.40px;width:184.74px;height:9.90px;background:#fdebfc"></div>
<span class="t r val" style="left:621.67px;top:369.20px;">52,65</span>
<span class="t c dots" style="left:645.67px;top:368.30px;">......</span>
<span class="t r val" style="left:745.17px;top:369.20px;">-32,2</span>
<span class="t r val" style="left:775.67px;top:369.20px;">18,8%</span>
<div style="left:597.42px;top:373.27px;width:184.74px;height:9.90px;background:#fdebfc"></div>
<span class="t r val" style="left:621.67px;top:379.07px;">50,15</span>
<span class="t c dots" style="left:645.67px;top:378.18px;">......</span>
<span class="t r val" style="left:745.17px;top:379.07px;">-30,6</span>
<span class="t r val" style="left:775.67px;top:379.07px;">19,2%</span>
<div style="left:597.42px;top:383.15px;width:184.74px;height:9.90px;background:#fdebfc"></div>
<span class="t r val" style="left:621.67px;top:388.95px;">47,90</span>
<span class="t c dots" style="left:645.67px;top:388.05px;">......</span>
<span class="t r val" style="left:745.17px;top:388.95px;">-29,1</span>
<span class="t r val" style="left:775.67px;top:388.95px;">19,6%</span>
<div style="left:597.42px;top:393.02px;width:184.74px;height:9.90px;background:#fdebfc"></div>
<span class="t r val" style="left:621.67px;top:398.82px;">45,25</span>
<span class="t c dots" style="left:645.67px;top:397.93px;">......</span>
<span class="t r val" style="left:745.17px;top:398.82px;">-27,6</span>
<span class="t r val" style="left:775.67px;top:398.82px;">19,9%</span>
<div style="left:597.42px;top:402.90px;width:184.74px;height:9.90px;background:#fdebfc"></div>
<span class="t r val" style="left:621.67px;top:408.70px;">43,00</span>
<span class="t c dots" style="left:645.67px;top:407.80px;">......</span>
<span class="t r val" style="left:745.17px;top:408.70px;">-26,3</span>
<span class="t r val" style="left:775.67px;top:408.70px;">20,2%</span>
<div style="left:597.42px;top:412.77px;width:184.74px;height:9.90px;background:#fdebfc"></div>
<span class="t r val" style="left:621.67px;top:418.57px;">41,15</span>
<span class="t c dots" style="left:645.67px;top:417.68px;">......</span>
<span class="t r val" style="left:745.17px;top:418.57px;">-25,0</span>
<span class="t r val" style="left:775.67px;top:418.57px;">20,6%</span>
<div style="left:597.42px;top:422.65px;width:184.74px;height:9.90px;background:#e4fcfc"></div>
<span class="t r val" style="left:621.67px;top:428.45px;">39,15</span>
<span class="t c dots" style="left:645.67px;top:427.55px;">......</span>
<span class="t r val" style="left:745.17px;top:428.45px;">-23,7</span>
<span class="t r val" style="left:775.67px;top:428.45px;">20,9%</span>
<div style="left:597.42px;top:432.52px;width:184.74px;height:9.90px;background:#e4fcfc"></div>
<span class="t r val" style="left:621.67px;top:438.32px;">37,15</span>
<span class="t c dots" style="left:645.67px;top:437.43px;">......</span>
<span class="t r val" style="left:745.17px;top:438.32px;">-22,6</span>
<span class="t r val" style="left:775.67px;top:438.32px;">21,2%</span>
<div style="left:597.42px;top:442.40px;width:184.74px;height:9.90px;background:#e4fcfc"></div>
<span class="t r val" style="left:621.67px;top:448.20px;">36,40</span>
<span class="t c dots" style="left:645.67px;top:447.30px;">......</span>
<span class="t r val" style="left:745.17px;top:448.20px;">-21,5</span>
<span class="t r val" style="left:775.67px;top:448.20px;">21,9%</span>
<div style="left:597.42px;top:452.27px;width:184.74px;height:9.90px;background:#e4fcfc"></div>
<span class="t r val" style="left:621.67px;top:458.07px;">33,75</span>
<span class="t c dots" style="left:645.67px;top:457.18px;">......</span>
<span class="t r val" style="left:745.17px;top:458.07px;">-20,4</span>
<span class="t r val" style="left:775.67px;top:458.07px;">22,0%</span>
<div style="left:597.42px;top:462.15px;width:184.74px;height:9.90px;background:#e4fcfc"></div>
<span class="t r val" style="left:621.67px;top:467.95px;">32,15</span>
<span class="t c dots" style="left:645.67px;top:467.05px;">......</span>
<span class="t r val" style="left:745.17px;top:467.95px;">-19,4</span>
<span class="t r val" style="left:775.67px;top:467.95px;">22,3%</span>
<div style="left:597.42px;top:472.02px;width:184.74px;height:9.90px;background:#e4fcfc"></div>
<span class="t r val" style="left:621.67px;top:477.82px;">30,65</span>
<span class="t c dots" style="left:645.67px;top:476.93px;">......</span>
<span class="t r val" style="left:745.17px;top:477.82px;">-18,5</span>
<span class="t r val" style="left:775.67px;top:477.82px;">22,7%</span>
<div style="left:597.42px;top:481.90px;width:184.74px;height:9.90px;background:#e4fcfc"></div>
<span class="t r val" style="left:621.67px;top:487.70px;">29,15</span>
<span class="t c dots" style="left:645.67px;top:486.80px;">......</span>
<span class="t r val" style="left:745.17px;top:487.70px;">-17,6</span>
<span class="t r val" style="left:775.67px;top:487.70px;">22,9%</span>
<div style="left:597.42px;top:491.77px;width:184.74px;height:9.90px;background:#e4fcfc"></div>
<span class="t r val" style="left:621.67px;top:497.57px;">27,50</span>
<span class="t c dots" style="left:645.67px;top:496.68px;">......</span>
<span class="t r val" style="left:745.17px;top:497.57px;">-16,8</span>
<span class="t r val" style="left:775.67px;top:497.57px;">23,2%</span>
<div style="left:597.42px;top:501.65px;width:184.74px;height:9.90px;background:#e4fcfc"></div>
<span class="t r val" style="left:621.67px;top:507.45px;">26,25</span>
<span class="t c dots" style="left:645.67px;top:506.55px;">......</span>
<span class="t r val" style="left:745.17px;top:507.45px;">-16,0</span>
<span class="t r val" style="left:775.67px;top:507.45px;">23,6%</span>
<div style="left:597.42px;top:511.52px;width:184.74px;height:9.90px;background:#e4fcfc"></div>
<span class="t r val" style="left:621.67px;top:517.33px;">24,90</span>
<span class="t c dots" style="left:645.67px;top:516.43px;">......</span>
<span class="t r val" style="left:745.17px;top:517.33px;">-15,2</span>
<span class="t r val" style="left:775.67px;top:517.33px;">23,8%</span>
<div style="left:782.16px;top:123.10px;width:184.74px;height:9.90px;background:#e4fcfc"></div>
<span class="t r val" style="left:806.41px;top:128.90px;">13,50</span>
<span class="t c dots" style="left:830.41px;top:128.00px;">......</span>
<span class="t r val" style="left:929.91px;top:128.90px;">17,7</span>
<span class="t r val" style="left:960.41px;top:128.90px;">13,1%</span>
<div style="left:782.16px;top:133.00px;width:184.74px;height:9.90px;background:#e4fcfc"></div>
<span class="t r val" style="left:806.41px;top:138.80px;">16,25</span>
<span class="t c dots" style="left:830.41px;top:137.90px;">......</span>
<span class="t r val" style="left:929.91px;top:138.80px;">19,6</span>
<span class="t r val" style="left:960.41px;top:138.80px;">13,5%</span>
<div style="left:782.16px;top:142.90px;width:184.74px;height:9.90px;background:#fdebfc"></div>
<span class="t r val" style="left:806.41px;top:148.70px;">18,15</span>
<span class="t c dots" style="left:830.41px;top:147.80px;">......</span>
<span class="t r val" style="left:929.91px;top:148.70px;">21,6</span>
<span class="t r val" style="left:960.41px;top:148.70px;">13,5%</span>
<div style="left:782.16px;top:152.80px;width:184.74px;height:9.90px;background:#fdebfc"></div>
<span class="t r val" style="left:806.41px;top:158.60px;">21,40</span>
<span class="t c dots" style="left:830.41px;top:157.70px;">......</span>
<span class="t r val" style="left:929.91px;top:158.60px;">23,6</span>
<span class="t r val" style="left:960.41px;top:158.60px;">13,9%</span>
<div style="left:782.16px;top:162.70px;width:184.74px;height:9.90px;background:#fdebfc"></div>
<span class="t r val" style="left:806.41px;top:168.50px;">24,25</span>
<span class="t c dots" style="left:830.41px;top:167.60px;">......</span>
<span class="t r val" style="left:929.91px;top:168.50px;">25,7</span>
<span class="t r val" style="left:960.41px;top:168.50px;">14,1%</span>
<div style="left:782.16px;top:172.60px;width:184.74px;height:9.90px;background:#fdebfc"></div>
<span class="t r val" style="left:806.41px;top:178.40px;">27,50</span>
<span class="t c dots" style="left:830.41px;top:177.50px;">......</span>
<span class="t r val" style="left:929.91px;top:178.40px;">27,9</span>
<span class="t r val" style="left:960.41px;top:178.40px;">14,3%</span>
<div style="left:782.16px;top:182.50px;width:184.74px;height:9.90px;background:#fdebfc"></div>
<span class="t r val" style="left:806.41px;top:188.30px;">31,00</span>
<span class="t c dots" style="left:830.41px;top:187.40px;">......</span>
<span class="t r val" style="left:929.91px;top:188.30px;">30,2</span>
<span class="t r val" style="left:960.41px;top:188.30px;">14,5%</span>
<div style="left:782.16px;top:192.40px;width:184.74px;height:9.90px;background:#fdebfc"></div>
<span class="t r val" style="left:806.41px;top:198.20px;">34,75</span>
<span class="t c dots" style="left:830.41px;top:197.30px;">......</span>
<span class="t r val" style="left:929.91px;top:198.20px;">32,4</span>
<span class="t r val" style="left:960.41px;top:198.20px;">14,7%</span>
<div style="left:782.16px;top:202.30px;width:184.74px;height:9.90px;background:#fdebfc"></div>
<span class="t r val" style="left:806.41px;top:208.10px;">38,90</span>
<span class="t c dots" style="left:830.41px;top:207.20px;">......</span>
<span class="t r val" style="left:929.91px;top:208.10px;">34,7</span>
<span class="t r val" style="left:960.41px;top:208.10px;">15,0%</span>
<div style="left:782.16px;top:212.20px;width:184.74px;height:9.90px;background:#fdebfc"></div>
<span class="t r val" style="left:806.41px;top:218.00px;">43,25</span>
<span class="t c dots" style="left:830.41px;top:217.10px;">......</span>
<span class="t r val" style="left:929.91px;top:218.00px;">37,1</span>
<span class="t r val" style="left:960.41px;top:218.00px;">15,2%</span>
<div style="left:782.16px;top:222.10px;width:184.74px;height:9.90px;background:#fdebfc"></div>
<span class="t r val" style="left:806.41px;top:227.90px;">47,90</span>
<span class="t c dots" style="left:830.41px;top:227.00px;">......</span>
<span class="t r val" style="left:929.91px;top:227.90px;">39,4</span>
<span class="t r val" style="left:960.41px;top:227.90px;">15,5%</span>
<div style="left:782.16px;top:232.00px;width:184.74px;height:9.90px;background:#fdebfc"></div>
<span class="t r val" style="left:806.41px;top:237.80px;">52,75</span>
<span class="t c dots" style="left:830.41px;top:236.90px;">......</span>
<span class="t r val" style="left:929.91px;top:237.80px;">41,7</span>
<span class="t r val" style="left:960.41px;top:237.80px;">15,8%</span>
<div style="left:782.16px;top:241.90px;width:184.74px;height:9.90px;background:#fdebfc"></div>
<span class="t r val" style="left:806.41px;top:247.70px;">57,90</span>
<span class="t c dots" style="left:830.41px;top:246.80px;">......</span>
<span class="t r val" style="left:929.91px;top:247.70px;">44,0</span>
<span class="t r val" style="left:960.41px;top:247.70px;">16,0%</span>
<div style="left:782.16px;top:251.80px;width:184.74px;height:9.90px;background:#fdebfc"></div>
<span class="t r val" style="left:806.41px;top:257.60px;">63,25</span>
<span class="t c dots" style="left:830.41px;top:256.70px;">......</span>
<span class="t r val" style="left:929.91px;top:257.60px;">46,3</span>
<span class="t r val" style="left:960.41px;top:257.60px;">16,3%</span>
<div style="left:782.16px;top:261.70px;width:184.74px;height:9.90px;background:#fdebfc"></div>
<span class="t r val" style="left:806.41px;top:267.50px;">68,90</span>
<span class="t c dots" style="left:830.41px;top:266.60px;">......</span>
<span class="t r val" style="left:929.91px;top:267.50px;">48,6</span>
<span class="t r val" style="left:960.41px;top:267.50px;">16,6%</span>
<div style="left:782.16px;top:271.60px;width:184.74px;height:9.90px;background:#f5d6f5"></div>
<span class="t r val" style="left:806.41px;top:277.40px;">73,25</span>
<span class="t c dots" style="left:830.41px;top:276.50px;">......</span>
<span class="t r val" style="left:929.91px;top:277.40px;">50,8</span>
<span class="t r val" style="left:960.41px;top:277.40px;">16,5%</span>
<div style="left:782.16px;top:281.50px;width:184.74px;height:9.90px;background:#fdebfc"></div>
<span class="t r val" style="left:806.41px;top:287.30px;">80,90</span>
<span class="t c dots" style="left:830.41px;top:286.40px;">......</span>
<span class="t r val" style="left:929.91px;top:287.30px;">53,0</span>
<span class="t r val" style="left:960.41px;top:287.30px;">17,2%</span>
<div style="left:782.16px;top:291.40px;width:184.74px;height:9.90px;background:#fdebfc"></div>
<span class="t r val" style="left:806.41px;top:297.20px;">85,90</span>
<span class="t c dots" style="left:830.41px;top:296.30px;">......</span>
<span class="t r val" style="left:929.91px;top:297.20px;">55,2</span>
<span class="t r val" style="left:960.41px;top:297.20px;">17,2%</span>
<div style="left:782.16px;top:301.30px;width:184.74px;height:9.90px;background:#fdebfc"></div>
<span class="t r val" style="left:806.41px;top:307.10px;">93,40</span>
<span class="t c dots" style="left:830.41px;top:306.20px;">......</span>
<span class="t r val" style="left:929.91px;top:307.10px;">57,2</span>
<span class="t r val" style="left:960.41px;top:307.10px;">17,7%</span>
<div style="left:782.16px;top:311.20px;width:184.74px;height:9.90px;background:#fdebfc"></div>
<span class="t r val" style="left:806.41px;top:317.00px;">98,90</span>
<span class="t c dots" style="left:830.41px;top:316.10px;">......</span>
<span class="t r val" style="left:929.91px;top:317.00px;">59,3</span>
<span class="t r val" style="left:960.41px;top:317.00px;">17,8%</span>
<div style="left:782.16px;top:323.90px;width:184.74px;height:9.90px;background:#fdebfc"></div>
<span class="t r val" style="left:806.41px;top:329.70px;">78,25</span>
<span class="t c dots" style="left:830.41px;top:328.80px;">......</span>
<span class="t r val" style="left:929.91px;top:329.70px;">-42,7</span>
<span class="t r val" style="left:960.41px;top:329.70px;">17,6%</span>
<div style="left:782.16px;top:333.77px;width:184.74px;height:9.90px;background:#fdebfc"></div>
<span class="t r val" style="left:806.41px;top:339.57px;">75,00</span>
<span class="t c dots" style="left:830.41px;top:338.68px;">......</span>
<span class="t r val" style="left:929.91px;top:339.57px;">-40,9</span>
<span class="t r val" style="left:960.41px;top:339.57px;">17,9%</span>
<div style="left:782.16px;top:343.65px;width:184.74px;height:9.90px;background:#fdebfc"></div>
<span class="t r val" style="left:806.41px;top:349.45px;">71,00</span>
<span class="t c dots" style="left:830.41px;top:348.55px;">......</span>
<span class="t r val" style="left:929.91px;top:349.45px;">-39,1</span>
<span class="t r val" style="left:960.41px;top:349.45px;">18,1%</span>
<div style="left:782.16px;top:353.52px;width:184.74px;height:9.90px;background:#fdebfc"></div>
<span class="t r val" style="left:806.41px;top:359.32px;">67,75</span>
<span class="t c dots" style="left:830.41px;top:358.43px;">......</span>
<span class="t r val" style="left:929.91px;top:359.32px;">-37,3</span>
<span class="t r val" style="left:960.41px;top:359.32px;">18,4%</span>
<div style="left:782.16px;top:363.40px;width:184.74px;height:9.90px;background:#fdebfc"></div>
<span class="t r val" style="left:806.41px;top:369.20px;">64,65</span>
<span class="t c dots" style="left:830.41px;top:368.30px;">......</span>
<span class="t r val" style="left:929.91px;top:369.20px;">-35,7</span>
<span class="t r val" style="left:960.41px;top:369.20px;">18,7%</span>
<div style="left:782.16px;top:373.27px;width:184.74px;height:9.90px;background:#fdebfc"></div>
<span class="t r val" style="left:806.41px;top:379.07px;">61,65</span>
<span class="t c dots" style="left:830.41px;top:378.18px;">......</span>
<span class="t r val" style="left:929.91px;top:379.07px;">-34,1</span>
<span class="t r val" style="left:960.41px;top:379.07px;">19,0%</span>
<div style="left:782.16px;top:383.15px;width:184.74px;height:9.90px;background:#fdebfc"></div>
<span class="t r val" style="left:806.41px;top:388.95px;">59,25</span>
<span class="t c dots" style="left:830.41px;top:388.05px;">......</span>
<span class="t r val" style="left:929.91px;top:388.95px;">-32,5</span>
<span class="t r val" style="left:960.41px;top:388.95px;">19,3%</span>
<div style="left:782.16px;top:393.02px;width:184.74px;height:9.90px;background:#fdebfc"></div>
<span class="t r val" style="left:806.41px;top:398.82px;">57,00</span>
<span class="t c dots" style="left:830.41px;top:397.93px;">......</span>
<span class="t r val" style="left:929.91px;top:398.82px;">-31,1</span>
<span class="t r val" style="left:960.41px;top:398.82px;">19,7%</span>
<div style="left:782.16px;top:402.90px;width:184.74px;height:9.90px;background:#fdebfc"></div>
<span class="t r val" style="left:806.41px;top:408.70px;">54,65</span>
<span class="t c dots" style="left:830.41px;top:407.80px;">......</span>
<span class="t r val" style="left:929.91px;top:408.70px;">-29,7</span>
<span class="t r val" style="left:960.41px;top:408.70px;">20,0%</span>
<div style="left:782.16px;top:412.77px;width:184.74px;height:9.90px;background:#fdebfc"></div>
<span class="t r val" style="left:806.41px;top:418.57px;">51,65</span>
<span class="t c dots" style="left:830.41px;top:417.68px;">......</span>
<span class="t r val" style="left:929.91px;top:418.57px;">-28,3</span>
<span class="t r val" style="left:960.41px;top:418.57px;">20,2%</span>
<div style="left:782.16px;top:422.65px;width:184.74px;height:9.90px;background:#fdebfc"></div>
<span class="t r val" style="left:806.41px;top:428.45px;">49,40</span>
<span class="t c dots" style="left:830.41px;top:427.55px;">......</span>
<span class="t r val" style="left:929.91px;top:428.45px;">-27,0</span>
<span class="t r val" style="left:960.41px;top:428.45px;">20,5%</span>
<div style="left:782.16px;top:432.52px;width:184.74px;height:9.90px;background:#e4fcfc"></div>
<span class="t r val" style="left:806.41px;top:438.32px;">47,00</span>
<span class="t c dots" style="left:830.41px;top:437.43px;">......</span>
<span class="t r val" style="left:929.91px;top:438.32px;">-25,8</span>
<span class="t r val" style="left:960.41px;top:438.32px;">20,8%</span>
<div style="left:782.16px;top:442.40px;width:184.74px;height:9.90px;background:#e4fcfc"></div>
<span class="t r val" style="left:806.41px;top:448.20px;">45,15</span>
<span class="t c dots" style="left:830.41px;top:447.30px;">......</span>
<span class="t r val" style="left:929.91px;top:448.20px;">-24,6</span>
<span class="t r val" style="left:960.41px;top:448.20px;">21,1%</span>
<div style="left:782.16px;top:452.27px;width:184.74px;height:9.90px;background:#e4fcfc"></div>
<span class="t r val" style="left:806.41px;top:458.07px;">43,40</span>
<span class="t c dots" style="left:830.41px;top:457.18px;">......</span>
<span class="t r val" style="left:929.91px;top:458.07px;">-23,5</span>
<span class="t r val" style="left:960.41px;top:458.07px;">21,4%</span>
<div style="left:782.16px;top:462.15px;width:184.74px;height:9.90px;background:#e4fcfc"></div>
<span class="t r val" style="left:806.41px;top:467.95px;">41,40</span>
<span class="t c dots" style="left:830.41px;top:467.05px;">......</span>
<span class="t r val" style="left:929.91px;top:467.95px;">-22,4</span>
<span class="t r val" style="left:960.41px;top:467.95px;">21,6%</span>
<div style="left:782.16px;top:472.02px;width:184.74px;height:9.90px;background:#e4fcfc"></div>
<span class="t r val" style="left:806.41px;top:477.82px;">39,40</span>
<span class="t c dots" style="left:830.41px;top:476.93px;">......</span>
<span class="t r val" style="left:929.91px;top:477.82px;">-21,4</span>
<span class="t r val" style="left:960.41px;top:477.82px;">21,9%</span>
<div style="left:782.16px;top:481.90px;width:184.74px;height:9.90px;background:#e4fcfc"></div>
<span class="t r val" style="left:806.41px;top:487.70px;">39,00</span>
<span class="t c dots" style="left:830.41px;top:486.80px;">......</span>
<span class="t r val" style="left:929.91px;top:487.70px;">-20,4</span>
<span class="t r val" style="left:960.41px;top:487.70px;">22,5%</span>
<div style="left:782.16px;top:491.77px;width:184.74px;height:9.90px;background:#e4fcfc"></div>
<span class="t r val" style="left:806.41px;top:497.57px;">37,00</span>
<span class="t c dots" style="left:830.41px;top:496.68px;">......</span>
<span class="t r val" style="left:929.91px;top:497.57px;">-19,5</span>
<span class="t r val" style="left:960.41px;top:497.57px;">22,7%</span>
<div style="left:782.16px;top:501.65px;width:184.74px;height:9.90px;background:#e4fcfc"></div>
<span class="t r val" style="left:806.41px;top:507.45px;">35,75</span>
<span class="t c dots" style="left:830.41px;top:506.55px;">......</span>
<span class="t r val" style="left:929.91px;top:507.45px;">-18,6</span>
<span class="t r val" style="left:960.41px;top:507.45px;">23,1%</span>
<div style="left:782.16px;top:511.52px;width:184.74px;height:9.90px;background:#e4fcfc"></div>
<span class="t r val" style="left:806.41px;top:517.33px;">33,75</span>
<span class="t c dots" style="left:830.41px;top:516.43px;">......</span>
<span class="t r val" style="left:929.91px;top:517.33px;">-17,8</span>
<span class="t r val" style="left:960.41px;top:517.33px;">23,3%</span>
<svg style="position:absolute;left:43px;top:122px" width="924" height="2" viewBox="43 122 924 2"><rect x="43.20" y="122.70" width="923.70" height="0.80" fill="rgba(110,110,150,0.22)"/></svg>
<svg style="position:absolute;left:43px;top:132px" width="924" height="2" viewBox="43 132 924 2"><rect x="43.20" y="132.60" width="923.70" height="0.80" fill="rgba(110,110,150,0.22)"/></svg>
<svg style="position:absolute;left:43px;top:142px" width="924" height="2" viewBox="43 142 924 2"><rect x="43.20" y="142.50" width="923.70" height="0.80" fill="rgba(110,110,150,0.22)"/></svg>
<svg style="position:absolute;left:43px;top:152px" width="924" height="2" viewBox="43 152 924 2"><rect x="43.20" y="152.40" width="923.70" height="0.80" fill="rgba(110,110,150,0.22)"/></svg>
<svg style="position:absolute;left:43px;top:162px" width="924" height="2" viewBox="43 162 924 2"><rect x="43.20" y="162.30" width="923.70" height="0.80" fill="rgba(110,110,150,0.22)"/></svg>
<svg style="position:absolute;left:43px;top:172px" width="924" height="1" viewBox="43 172 924 1"><rect x="43.20" y="172.20" width="923.70" height="0.80" fill="rgba(110,110,150,0.22)"/></svg>
<svg style="position:absolute;left:43px;top:182px" width="924" height="1" viewBox="43 182 924 1"><rect x="43.20" y="182.10" width="923.70" height="0.80" fill="rgba(110,110,150,0.22)"/></svg>
<svg style="position:absolute;left:43px;top:191px" width="924" height="2" viewBox="43 191 924 2"><rect x="43.20" y="192.00" width="923.70" height="0.80" fill="rgba(110,110,150,0.22)"/></svg>
<svg style="position:absolute;left:43px;top:201px" width="924" height="2" viewBox="43 201 924 2"><rect x="43.20" y="201.90" width="923.70" height="0.80" fill="rgba(110,110,150,0.22)"/></svg>
<svg style="position:absolute;left:43px;top:211px" width="924" height="2" viewBox="43 211 924 2"><rect x="43.20" y="211.80" width="923.70" height="0.80" fill="rgba(110,110,150,0.22)"/></svg>
<svg style="position:absolute;left:43px;top:221px" width="924" height="2" viewBox="43 221 924 2"><rect x="43.20" y="221.70" width="923.70" height="0.80" fill="rgba(110,110,150,0.22)"/></svg>
<svg style="position:absolute;left:43px;top:231px" width="924" height="2" viewBox="43 231 924 2"><rect x="43.20" y="231.60" width="923.70" height="0.80" fill="rgba(110,110,150,0.22)"/></svg>
<svg style="position:absolute;left:43px;top:241px" width="924" height="2" viewBox="43 241 924 2"><rect x="43.20" y="241.50" width="923.70" height="0.80" fill="rgba(110,110,150,0.22)"/></svg>
<svg style="position:absolute;left:43px;top:251px" width="924" height="2" viewBox="43 251 924 2"><rect x="43.20" y="251.40" width="923.70" height="0.80" fill="rgba(110,110,150,0.22)"/></svg>
<svg style="position:absolute;left:43px;top:261px" width="924" height="2" viewBox="43 261 924 2"><rect x="43.20" y="261.30" width="923.70" height="0.80" fill="rgba(110,110,150,0.22)"/></svg>
<svg style="position:absolute;left:43px;top:271px" width="924" height="1" viewBox="43 271 924 1"><rect x="43.20" y="271.20" width="923.70" height="0.80" fill="rgba(110,110,150,0.22)"/></svg>
<svg style="position:absolute;left:43px;top:281px" width="924" height="1" viewBox="43 281 924 1"><rect x="43.20" y="281.10" width="923.70" height="0.80" fill="rgba(110,110,150,0.22)"/></svg>
<svg style="position:absolute;left:43px;top:291px" width="924" height="1" viewBox="43 291 924 1"><rect x="43.20" y="291.00" width="923.70" height="0.80" fill="rgba(110,110,150,0.22)"/></svg>
<svg style="position:absolute;left:43px;top:300px" width="924" height="2" viewBox="43 300 924 2"><rect x="43.20" y="300.90" width="923.70" height="0.80" fill="rgba(110,110,150,0.22)"/></svg>
<svg style="position:absolute;left:43px;top:310px" width="924" height="2" viewBox="43 310 924 2"><rect x="43.20" y="310.80" width="923.70" height="0.80" fill="rgba(110,110,150,0.22)"/></svg>
<svg style="position:absolute;left:43px;top:320px" width="924" height="2" viewBox="43 320 924 2"><rect x="43.20" y="320.70" width="923.70" height="0.80" fill="rgba(110,110,150,0.22)"/></svg>
<svg style="position:absolute;left:43px;top:323px" width="924" height="2" viewBox="43 323 924 2"><rect x="43.20" y="323.50" width="923.70" height="0.80" fill="rgba(110,110,150,0.22)"/></svg>
<svg style="position:absolute;left:43px;top:333px" width="924" height="2" viewBox="43 333 924 2"><rect x="43.20" y="333.38" width="923.70" height="0.80" fill="rgba(110,110,150,0.22)"/></svg>
<svg style="position:absolute;left:43px;top:343px" width="924" height="2" viewBox="43 343 924 2"><rect x="43.20" y="343.25" width="923.70" height="0.80" fill="rgba(110,110,150,0.22)"/></svg>
<svg style="position:absolute;left:43px;top:353px" width="924" height="1" viewBox="43 353 924 1"><rect x="43.20" y="353.12" width="923.70" height="0.80" fill="rgba(110,110,150,0.22)"/></svg>
<svg style="position:absolute;left:43px;top:363px" width="924" height="1" viewBox="43 363 924 1"><rect x="43.20" y="363.00" width="923.70" height="0.80" fill="rgba(110,110,150,0.22)"/></svg>
<svg style="position:absolute;left:43px;top:372px" width="924" height="2" viewBox="43 372 924 2"><rect x="43.20" y="372.88" width="923.70" height="0.80" fill="rgba(110,110,150,0.22)"/></svg>
<svg style="position:absolute;left:43px;top:382px" width="924" height="2" viewBox="43 382 924 2"><rect x="43.20" y="382.75" width="923.70" height="0.80" fill="rgba(110,110,150,0.22)"/></svg>
<svg style="position:absolute;left:43px;top:392px" width="924" height="2" viewBox="43 392 924 2"><rect x="43.20" y="392.62" width="923.70" height="0.80" fill="rgba(110,110,150,0.22)"/></svg>
<svg style="position:absolute;left:43px;top:402px" width="924" height="2" viewBox="43 402 924 2"><rect x="43.20" y="402.50" width="923.70" height="0.80" fill="rgba(110,110,150,0.22)"/></svg>
<svg style="position:absolute;left:43px;top:412px" width="924" height="2" viewBox="43 412 924 2"><rect x="43.20" y="412.38" width="923.70" height="0.80" fill="rgba(110,110,150,0.22)"/></svg>
<svg style="position:absolute;left:43px;top:422px" width="924" height="2" viewBox="43 422 924 2"><rect x="43.20" y="422.25" width="923.70" height="0.80" fill="rgba(110,110,150,0.22)"/></svg>
<svg style="position:absolute;left:43px;top:432px" width="924" height="1" viewBox="43 432 924 1"><rect x="43.20" y="432.12" width="923.70" height="0.80" fill="rgba(110,110,150,0.22)"/></svg>
<svg style="position:absolute;left:43px;top:442px" width="924" height="1" viewBox="43 442 924 1"><rect x="43.20" y="442.00" width="923.70" height="0.80" fill="rgba(110,110,150,0.22)"/></svg>
<svg style="position:absolute;left:43px;top:451px" width="924" height="2" viewBox="43 451 924 2"><rect x="43.20" y="451.88" width="923.70" height="0.80" fill="rgba(110,110,150,0.22)"/></svg>
<svg style="position:absolute;left:43px;top:461px" width="924" height="2" viewBox="43 461 924 2"><rect x="43.20" y="461.75" width="923.70" height="0.80" fill="rgba(110,110,150,0.22)"/></svg>
<svg style="position:absolute;left:43px;top:471px" width="924" height="2" viewBox="43 471 924 2"><rect x="43.20" y="471.62" width="923.70" height="0.80" fill="rgba(110,110,150,0.22)"/></svg>
<svg style="position:absolute;left:43px;top:481px" width="924" height="2" viewBox="43 481 924 2"><rect x="43.20" y="481.50" width="923.70" height="0.80" fill="rgba(110,110,150,0.22)"/></svg>
<svg style="position:absolute;left:43px;top:491px" width="924" height="2" viewBox="43 491 924 2"><rect x="43.20" y="491.38" width="923.70" height="0.80" fill="rgba(110,110,150,0.22)"/></svg>
<svg style="position:absolute;left:43px;top:501px" width="924" height="2" viewBox="43 501 924 2"><rect x="43.20" y="501.25" width="923.70" height="0.80" fill="rgba(110,110,150,0.22)"/></svg>
<svg style="position:absolute;left:43px;top:511px" width="924" height="1" viewBox="43 511 924 1"><rect x="43.20" y="511.12" width="923.70" height="0.80" fill="rgba(110,110,150,0.22)"/></svg>
<svg style="position:absolute;left:43px;top:521px" width="924" height="1" viewBox="43 521 924 1"><rect x="43.20" y="521.00" width="923.70" height="0.80" fill="rgba(110,110,150,0.22)"/></svg>
<svg style="position:absolute;left:42px;top:111px" width="2" height="411" viewBox="42 111 2 411"><rect x="42.70" y="111.90" width="1.00" height="410.10" fill="rgba(120,130,160,0.38)"/></svg>
<svg style="position:absolute;left:227px;top:111px" width="2" height="411" viewBox="227 111 2 411"><rect x="227.44" y="111.90" width="1.00" height="410.10" fill="rgba(120,130,160,0.38)"/></svg>
<svg style="position:absolute;left:412px;top:111px" width="2" height="411" viewBox="412 111 2 411"><rect x="412.18" y="111.90" width="1.00" height="410.10" fill="rgba(120,130,160,0.38)"/></svg>
<svg style="position:absolute;left:596px;top:111px" width="2" height="411" viewBox="596 111 2 411"><rect x="596.92" y="111.90" width="1.00" height="410.10" fill="rgba(120,130,160,0.38)"/></svg>
<svg style="position:absolute;left:781px;top:111px" width="2" height="411" viewBox="781 111 2 411"><rect x="781.66" y="111.90" width="1.00" height="410.10" fill="rgba(120,130,160,0.38)"/></svg>
<svg style="position:absolute;left:966px;top:111px" width="2" height="411" viewBox="966 111 2 411"><rect x="966.40" y="111.90" width="1.00" height="410.10" fill="rgba(120,130,160,0.38)"/></svg>
<div style="left:43.20px;top:320.40px;width:924.20px;height:3.60px;background:#dcdcdc"></div>
<div style="left:228.44px;top:482.20px;width:186.74px;height:9.40px;border:0.7px solid #9a9a9a;box-sizing:border-box"></div>
<div style="left:288.94px;top:482.10px;width:31.50px;height:9.50px;border:0.8px solid #707070;box-sizing:border-box;background:rgba(255,255,255,.6)"></div>
<span class="t r val" style="left:311.44px;top:487.70px;color:#3434c4">-2</span>
<svg style="position:absolute;left:43px;top:522px" width="925" height="2" viewBox="43 522 925 2"><rect x="43.20" y="522.00" width="924.70" height="1.20" fill="#c9d4d8"/></svg>
<svg style="position:absolute;left:0;top:0" width="972" height="591" viewBox="0 0 972 591"><ellipse cx="317.5" cy="165.5" rx="89" ry="44" fill="rgba(250,170,160,0.12)" stroke="rgba(226,125,128,0.72)" stroke-width="2"/><ellipse cx="310" cy="477.5" rx="89.5" ry="43.5" transform="rotate(-3 310 477.5)" fill="rgba(250,170,160,0.12)" stroke="rgba(226,125,128,0.72)" stroke-width="2"/></svg>
<div style="left:4.30px;top:526.00px;width:36.20px;height:10.00px;background:#8c8c8c"></div>
<span class="t c lab" style="left:22.40px;top:531.00px;">Summary</span>
<span class="t c sh" style="left:85.00px;top:533.30px;">Existing</span>
<span class="t c sh" style="left:183.00px;top:533.30px;">Both</span>
<span class="t c sl" style="left:60.50px;top:543.50px;">Net Reqmts</span>
<span class="t c sl" style="left:107.50px;top:543.50px;">Gross Reqmts</span>
<span class="t c sl" style="left:158.50px;top:543.50px;">Net Reqmts</span>
<span class="t c sl" style="left:205.50px;top:543.50px;">Gross Reqmts</span>
<span class="t r sl" style="left:34.30px;top:556.80px;">Init</span>
<span class="t r sl" style="left:34.30px;top:567.80px;">Maint</span>
<span class="t r sl" style="left:34.30px;top:579.20px;">Cash/Init</span>
<div class="vb" style="left:38.50px;top:550.40px;width:45.20px;height:33.80px;"></div>
<svg style="position:absolute;left:39px;top:561px" width="44" height="1" viewBox="39 561 44 1"><rect x="39.30" y="561.00" width="43.50" height="0.80" fill="#9c9c9c"/></svg>
<svg style="position:absolute;left:39px;top:572px" width="44" height="1" viewBox="39 572 44 1"><rect x="39.30" y="572.00" width="43.50" height="0.80" fill="#9c9c9c"/></svg>
<span class="t r sv" style="left:77.00px;top:557.20px;">5.961$</span>
<span class="t r sv" style="left:77.00px;top:568.20px;">4.544$</span>
<span class="t r sv" style="left:77.00px;top:579.60px;">0,12</span>
<div class="vb" style="left:85.50px;top:550.40px;width:45.40px;height:33.80px;"></div>
<svg style="position:absolute;left:86px;top:561px" width="44" height="1" viewBox="86 561 44 1"><rect x="86.30" y="561.00" width="43.70" height="0.80" fill="#9c9c9c"/></svg>
<svg style="position:absolute;left:86px;top:572px" width="44" height="1" viewBox="86 572 44 1"><rect x="86.30" y="572.00" width="43.70" height="0.80" fill="#9c9c9c"/></svg>
<span class="t r sv" style="left:124.20px;top:557.20px;">6.686$</span>
<span class="t r sv" style="left:124.20px;top:568.20px;">5.269$</span>
<span class="t r sv" style="left:124.20px;top:579.60px;">0,11</span>
<div class="vb" style="left:136.20px;top:550.40px;width:45.70px;height:33.80px;"></div>
<svg style="position:absolute;left:137px;top:561px" width="44" height="1" viewBox="137 561 44 1"><rect x="137.00" y="561.00" width="44.00" height="0.80" fill="#9c9c9c"/></svg>
<svg style="position:absolute;left:137px;top:572px" width="44" height="1" viewBox="137 572 44 1"><rect x="137.00" y="572.00" width="44.00" height="0.80" fill="#9c9c9c"/></svg>
<span class="t r sv" style="left:175.20px;top:557.20px;">5.331$</span>
<span class="t r sv" style="left:175.20px;top:568.20px;">4.079$</span>
<span class="t r sv" style="left:175.20px;top:579.60px;">0,13</span>
<div class="vb" style="left:183.70px;top:550.40px;width:45.70px;height:33.80px;"></div>
<svg style="position:absolute;left:184px;top:561px" width="45" height="1" viewBox="184 561 45 1"><rect x="184.50" y="561.00" width="44.00" height="0.80" fill="#9c9c9c"/></svg>
<svg style="position:absolute;left:184px;top:572px" width="45" height="1" viewBox="184 572 45 1"><rect x="184.50" y="572.00" width="44.00" height="0.80" fill="#9c9c9c"/></svg>
<span class="t r sv" style="left:222.70px;top:557.20px;">6.035$</span>
<span class="t r sv" style="left:222.70px;top:568.20px;">4.783$</span>
<span class="t r sv" style="left:222.70px;top:579.60px;">0,12</span>
<span class="t r sl" style="left:268.70px;top:545.60px;">Cash Flow</span>
<span class="t r sl" style="left:268.70px;top:556.80px;">Cur. Value</span>
<span class="t r sl" style="left:268.70px;top:567.80px;">Gain/Loss</span>
<span class="t r sl" style="left:268.70px;top:579.20px;">Commis</span>
<span class="t c sh" style="left:295.00px;top:533.30px;">Existing</span>
<span class="t c sh" style="left:340.00px;top:533.30px;">Both</span>
<div class="vb" style="left:270.90px;top:539.00px;width:45.80px;height:45.20px;"></div>
<svg style="position:absolute;left:271px;top:550px" width="45" height="1" viewBox="271 550 45 1"><rect x="271.70" y="550.00" width="44.10" height="0.80" fill="#9c9c9c"/></svg>
<svg style="position:absolute;left:271px;top:561px" width="45" height="1" viewBox="271 561 45 1"><rect x="271.70" y="561.00" width="44.10" height="0.80" fill="#9c9c9c"/></svg>
<svg style="position:absolute;left:271px;top:572px" width="45" height="1" viewBox="271 572 45 1"><rect x="271.70" y="572.00" width="44.10" height="0.80" fill="#9c9c9c"/></svg>
<span class="t r sv" style="left:310.70px;top:546.00px;">+725$</span>
<span class="t r sv" style="left:310.70px;top:557.20px;">-1.224$</span>
<span class="t r sv" style="left:310.70px;top:568.20px;">-394$</span>
<span class="t r sv" style="left:310.70px;top:579.60px;">4,00$</span>
<div class="vb" style="left:318.40px;top:539.00px;width:45.30px;height:45.20px;"></div>
<svg style="position:absolute;left:319px;top:550px" width="44" height="1" viewBox="319 550 44 1"><rect x="319.20" y="550.00" width="43.60" height="0.80" fill="#9c9c9c"/></svg>
<svg style="position:absolute;left:319px;top:561px" width="44" height="1" viewBox="319 561 44 1"><rect x="319.20" y="561.00" width="43.60" height="0.80" fill="#9c9c9c"/></svg>
<svg style="position:absolute;left:319px;top:572px" width="44" height="1" viewBox="319 572 44 1"><rect x="319.20" y="572.00" width="43.60" height="0.80" fill="#9c9c9c"/></svg>
<span class="t r sv" style="left:358.00px;top:546.00px;">+704$</span>
<span class="t r sv" style="left:358.00px;top:557.20px;">-1.224$</span>
<span class="t r sv" style="left:358.00px;top:568.20px;">-394$</span>
<span class="t r sv" style="left:358.00px;top:579.60px;">8,80$</span>
<span class="t r sl" style="left:393.80px;top:545.60px;">Delta</span>
<span class="t r sl" style="left:393.80px;top:556.80px;">Gamma</span>
<span class="t r sl" style="left:393.80px;top:567.80px;">Theta</span>
<span class="t r sl" style="left:393.80px;top:579.20px;">Vega</span>
<span class="t c tiny" style="left:368.00px;top:567.50px;">&#8226;</span>
<span class="t c sh" style="left:415.50px;top:533.30px;">Existing</span>
<span class="t c sh" style="left:451.50px;top:533.30px;">Both</span>
<div class="vb" style="left:399.70px;top:539.00px;width:34.00px;height:45.20px;"></div>
<svg style="position:absolute;left:400px;top:550px" width="33" height="1" viewBox="400 550 33 1"><rect x="400.50" y="550.00" width="32.30" height="0.80" fill="#9c9c9c"/></svg>
<svg style="position:absolute;left:400px;top:561px" width="33" height="1" viewBox="400 561 33 1"><rect x="400.50" y="561.00" width="32.30" height="0.80" fill="#9c9c9c"/></svg>
<svg style="position:absolute;left:400px;top:572px" width="33" height="1" viewBox="400 572 33 1"><rect x="400.50" y="572.00" width="32.30" height="0.80" fill="#9c9c9c"/></svg>
<span class="t r sv" style="left:428.20px;top:546.00px;">16,79</span>
<span class="t r sv" style="left:428.20px;top:557.20px;">-0,39</span>
<span class="t r sv" style="left:428.20px;top:568.20px;">53,42</span>
<span class="t r sv" style="left:428.20px;top:579.60px;">-186,5</span>
<div class="vb" style="left:435.20px;top:539.00px;width:34.70px;height:45.20px;"></div>
<svg style="position:absolute;left:436px;top:550px" width="33" height="1" viewBox="436 550 33 1"><rect x="436.00" y="550.00" width="33.00" height="0.80" fill="#9c9c9c"/></svg>
<svg style="position:absolute;left:436px;top:561px" width="33" height="1" viewBox="436 561 33 1"><rect x="436.00" y="561.00" width="33.00" height="0.80" fill="#9c9c9c"/></svg>
<svg style="position:absolute;left:436px;top:572px" width="33" height="1" viewBox="436 572 33 1"><rect x="436.00" y="572.00" width="33.00" height="0.80" fill="#9c9c9c"/></svg>
<span class="t r sv" style="left:463.70px;top:546.00px;">6,00</span>
<span class="t r sv" style="left:463.70px;top:557.20px;">-0,48</span>
<span class="t r sv" style="left:463.70px;top:568.20px;">55,44</span>
<span class="t r sv" style="left:463.70px;top:579.60px;">-198,5</span>
<span class="t r sl" style="left:503.00px;top:545.60px;">Avg.IV</span>
<span class="t r sl" style="left:503.00px;top:556.80px;">Calls.IV</span>
<span class="t r sl" style="left:503.00px;top:567.80px;">Puts.IV</span>
<span class="t r sl" style="left:503.00px;top:579.20px;">P/C (Vol)</span>
<div class="vb" style="left:505.20px;top:539.00px;width:35.20px;height:45.20px;"></div>
<svg style="position:absolute;left:506px;top:550px" width="34" height="1" viewBox="506 550 34 1"><rect x="506.00" y="550.00" width="33.50" height="0.80" fill="#9c9c9c"/></svg>
<svg style="position:absolute;left:506px;top:561px" width="34" height="1" viewBox="506 561 34 1"><rect x="506.00" y="561.00" width="33.50" height="0.80" fill="#9c9c9c"/></svg>
<svg style="position:absolute;left:506px;top:572px" width="34" height="1" viewBox="506 572 34 1"><rect x="506.00" y="572.00" width="33.50" height="0.80" fill="#9c9c9c"/></svg>
<span class="t r sv" style="left:534.20px;top:546.00px;">17,4%</span>
<span class="t r sv" style="left:534.20px;top:557.20px;">17,5%</span>
<span class="t r sv" style="left:534.20px;top:568.20px;">17,2%</span>
<span class="t r sv" style="left:534.20px;top:579.60px;">2,28</span>
<span class="t r sl" style="left:967.50px;top:532.30px;">Volty model: '</span>
<div style="left:3.40px;top:586.80px;width:965.60px;height:1.80px;background:linear-gradient(#777,#3a3a3a 40%,#444 75%,#aaa)"></div>
<div style="left:0.00px;top:588.70px;width:972.00px;height:2.30px;background:#fff"></div>
<div style="left:969.00px;top:0.00px;width:3.00px;height:591.00px;background:#fff"></div>
</div></body></html>
